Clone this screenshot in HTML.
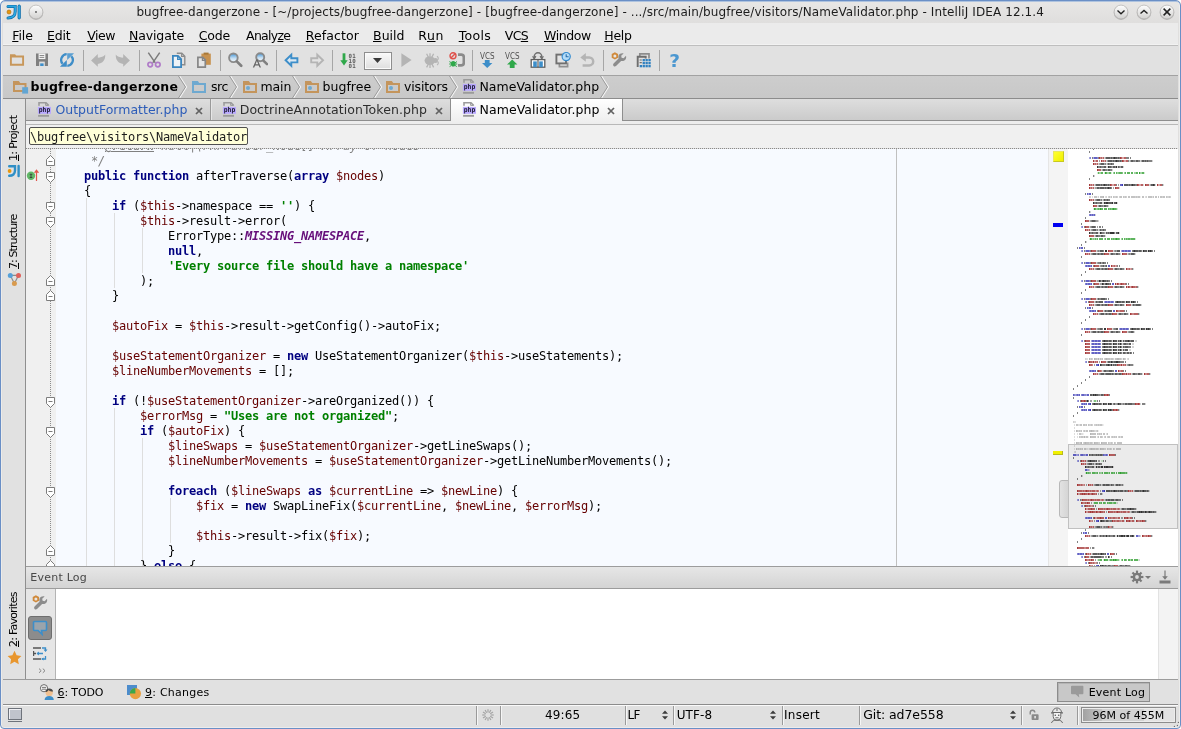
<!DOCTYPE html>
<html><head><meta charset="utf-8"><title>bugfree-dangerzone - IntelliJ IDEA 12.1.4</title>
<style>

html,body{margin:0;padding:0;}
body{width:1181px;height:729px;overflow:hidden;background:#fff;font-family:"DejaVu Sans","Liberation Sans",sans-serif;font-size:12.5px;color:#000;}
#win{position:absolute;left:0;top:0;width:1181px;height:729px;overflow:hidden;background:#e0dfde;border-radius:5px 5px 4px 4px;will-change:transform;}
.abs{position:absolute;}
.t{white-space:pre;}
.t u{text-decoration:underline;text-underline-offset:0.5px;text-decoration-thickness:1px;}
.vt{transform-origin:0 0;transform:rotate(-90deg);}
#frame{position:absolute;left:0;top:0;width:1179px;height:727px;border:1px solid #6a8fc6;border-radius:5px 5px 4px 4px;box-shadow:inset 0 1px 0 rgba(120,158,210,.55),inset 0 0 0 1px rgba(255,255,255,.4);z-index:50;pointer-events:none;}
#crumb{position:absolute;left:29px;top:127px;height:16px;width:217px;border:1px solid #4f4f4f;border-radius:2px;background:#ffffd8;font-family:"DejaVu Sans Mono","Liberation Mono",monospace;font-size:12px;line-height:18px;letter-spacing:-0.2247px;white-space:pre;padding-left:0;color:#1c1c1c;}
#editor{position:absolute;left:26px;top:149px;width:1152px;height:417px;overflow:hidden;background:#f7faff;}
#gutter{position:absolute;left:0;top:0;width:30px;height:417px;background:#f0f0f0;}
#code{position:absolute;left:30px;top:-10px;font-family:"DejaVu Sans Mono","Liberation Mono",monospace;font-size:12px;line-height:15px;letter-spacing:-0.2247px;white-space:pre;color:#000;}
.ln{height:15px;}
.k{color:#000080;font-weight:bold;}
.v{color:#660000;}
.s{color:#008000;font-weight:bold;}
.c{color:#660e7a;font-weight:bold;font-style:italic;}
.cm{color:#808080;font-style:italic;}
.tg{font-weight:bold;text-decoration:underline;}
.ig{position:absolute;width:1px;background:#dedede;}

</style></head>
<body>
<div id="win">
<div class="abs" style="left:0px;top:0px;width:1181px;height:23px;background:linear-gradient(#e8e7e6,#dfdedd)"></div>
<span class="abs t" style="left:136.40px;top:5px;font:12px 'DejaVu Sans',Liberation Sans,sans-serif;line-height:15px;letter-spacing:0.100px;color:#1c1c1c;">bugfree-dangerzone - [~/projects/bugfree-dangerzone] - [bugfree-dangerzone] - .../src/main/bugfree/visitors/NameValidator.php - IntelliJ IDEA 12.1.4</span>
<svg class="abs" style="left:6px;top:4px" width="16" height="16" viewBox="0 0 16 16" ><path d="M2.000 2.400H9.200V7.600C9.200 11.600 6.600 14 2 14" fill="none" stroke="#0e6aa8" stroke-width="3" stroke-linecap="round"/><path d="M2.000 2.400H9.200V7.600C9.200 11.600 6.600 14 2 14" fill="none" stroke="#2aa7e0" stroke-width="1.700" stroke-linecap="round"/><path d="M13.200 2.200V13.800" stroke="#0e6aa8" stroke-width="3.200" stroke-linecap="round"/><path d="M13.200 2.200V13.800" stroke="#2aa7e0" stroke-width="1.800" stroke-linecap="round"/><circle cx="3.000" cy="8" r="2" fill="#e8960c" stroke="#a8680a" stroke-width=".6"/></svg>
<svg class="abs" style="left:27px;top:2.5px" width="18" height="18" viewBox="0 0 18 18" ><defs><linearGradient id="wg0" x1="0" y1="0" x2="0" y2="1"><stop offset="0" stop-color="#fefefe"/><stop offset="1" stop-color="#d2d1d0"/></linearGradient></defs><circle cx="9" cy="9.700" r="7.200" fill="#8f8e8d" opacity=".5"/><circle cx="9" cy="9" r="6.900" fill="url(#wg0)" stroke="#b0afae" stroke-width=".7"/><circle cx="9" cy="9" r="0.900" fill="#555"/></svg>
<svg class="abs" style="left:1111.6px;top:2.5px" width="18" height="18" viewBox="0 0 18 18" ><defs><linearGradient id="wg1" x1="0" y1="0" x2="0" y2="1"><stop offset="0" stop-color="#fefefe"/><stop offset="1" stop-color="#d2d1d0"/></linearGradient></defs><circle cx="9" cy="9.700" r="7.200" fill="#8f8e8d" opacity=".5"/><circle cx="9" cy="9" r="6.900" fill="url(#wg1)" stroke="#b0afae" stroke-width=".7"/><path d="M5.500 7.600L9 10.700 12.500 7.600" fill="none" stroke="#222" stroke-width="1.400"/></svg>
<svg class="abs" style="left:1134.5px;top:2.5px" width="18" height="18" viewBox="0 0 18 18" ><defs><linearGradient id="wg2" x1="0" y1="0" x2="0" y2="1"><stop offset="0" stop-color="#fefefe"/><stop offset="1" stop-color="#d2d1d0"/></linearGradient></defs><circle cx="9" cy="9.700" r="7.200" fill="#8f8e8d" opacity=".5"/><circle cx="9" cy="9" r="6.900" fill="url(#wg2)" stroke="#b0afae" stroke-width=".7"/><path d="M5.500 10.500L9 7.400 12.500 10.500" fill="none" stroke="#222" stroke-width="1.400"/></svg>
<svg class="abs" style="left:1157.5px;top:2.5px" width="18" height="18" viewBox="0 0 18 18" ><defs><linearGradient id="wg3" x1="0" y1="0" x2="0" y2="1"><stop offset="0" stop-color="#fefefe"/><stop offset="1" stop-color="#d2d1d0"/></linearGradient></defs><circle cx="9" cy="9.700" r="7.200" fill="#8f8e8d" opacity=".5"/><circle cx="9" cy="9" r="6.900" fill="url(#wg3)" stroke="#b0afae" stroke-width=".7"/><path d="M5.600 5.600l6.800 6.800M12.400 5.600l-6.800 6.800" fill="none" stroke="#222" stroke-width="1.500"/></svg>
<div class="abs" style="left:3px;top:23px;width:1175px;height:21px;background:#ebebeb"></div>
<div class="abs" style="left:3px;top:44px;width:1175px;height:1px;background:#f2f2f2"></div>
<div class="abs" style="left:3px;top:45px;width:1175px;height:1px;background:#bebebe"></div>
<span class="abs t" style="left:12.20px;top:28px;font:12.5px 'DejaVu Sans',Liberation Sans,sans-serif;line-height:15px;letter-spacing:-0.075px;color:#000;"><u>F</u>ile</span>
<span class="abs t" style="left:47.00px;top:28px;font:12.5px 'DejaVu Sans',Liberation Sans,sans-serif;line-height:15px;letter-spacing:-0.168px;color:#000;"><u>E</u>dit</span>
<span class="abs t" style="left:87.30px;top:28px;font:12.5px 'DejaVu Sans',Liberation Sans,sans-serif;line-height:15px;letter-spacing:-0.480px;color:#000;"><u>V</u>iew</span>
<span class="abs t" style="left:129.10px;top:28px;font:12.5px 'DejaVu Sans',Liberation Sans,sans-serif;line-height:15px;letter-spacing:-0.154px;color:#000;"><u>N</u>avigate</span>
<span class="abs t" style="left:198.80px;top:28px;font:12.5px 'DejaVu Sans',Liberation Sans,sans-serif;line-height:15px;letter-spacing:-0.203px;color:#000;"><u>C</u>ode</span>
<span class="abs t" style="left:246.10px;top:28px;font:12.5px 'DejaVu Sans',Liberation Sans,sans-serif;line-height:15px;letter-spacing:-0.727px;color:#000;">Analy<u>z</u>e</span>
<span class="abs t" style="left:305.80px;top:28px;font:12.5px 'DejaVu Sans',Liberation Sans,sans-serif;line-height:15px;letter-spacing:0.101px;color:#000;"><u>R</u>efactor</span>
<span class="abs t" style="left:373.00px;top:28px;font:12.5px 'DejaVu Sans',Liberation Sans,sans-serif;line-height:15px;letter-spacing:0.039px;color:#000;"><u>B</u>uild</span>
<span class="abs t" style="left:418.30px;top:28px;font:12.5px 'DejaVu Sans',Liberation Sans,sans-serif;line-height:15px;letter-spacing:0.577px;color:#000;">R<u>u</u>n</span>
<span class="abs t" style="left:458.70px;top:28px;font:12.5px 'DejaVu Sans',Liberation Sans,sans-serif;line-height:15px;letter-spacing:0.305px;color:#000;"><u>T</u>ools</span>
<span class="abs t" style="left:504.80px;top:28px;font:12.5px 'DejaVu Sans',Liberation Sans,sans-serif;line-height:15px;letter-spacing:-0.640px;color:#000;">VC<u>S</u></span>
<span class="abs t" style="left:544.00px;top:28px;font:12.5px 'DejaVu Sans',Liberation Sans,sans-serif;line-height:15px;letter-spacing:-0.392px;color:#000;"><u>W</u>indow</span>
<span class="abs t" style="left:604.30px;top:28px;font:12.5px 'DejaVu Sans',Liberation Sans,sans-serif;line-height:15px;letter-spacing:-0.288px;color:#000;"><u>H</u>elp</span>
<div class="abs" style="left:3px;top:46px;width:1175px;height:29px;background:#e1e1e1"></div>
<div class="abs" style="left:3px;top:75px;width:1175px;height:1px;background:#a2a2a2"></div>
<svg class="abs" style="left:9px;top:52px" width="16" height="16" viewBox="0 0 16 16" ><path d="M1.900 4.500h12.200v8.300h-12.200z" fill="none" stroke="#c8975a" stroke-width="1.900"/><path d="M1 2.200h5.200l1.300 2.200H1z" fill="#c8975a"/></svg>
<svg class="abs" style="left:34px;top:52px" width="16" height="16" viewBox="0 0 16 16" ><path d="M2 1.5h12v12.5h-12z" fill="#7f7f7f"/><rect x="4.6" y="1.5" width="6.8" height="5.6" fill="#f4f4f4"/><rect x="5.6" y="3" width="4.6" height="0.9" fill="#7f7f7f"/><rect x="5.6" y="4.9" width="4.6" height="0.9" fill="#7f7f7f"/><rect x="5.2" y="9.6" width="5.6" height="4.4" fill="#e0e0e0"/><rect x="6.2" y="11.4" width="3.4" height="2.6" fill="#3d8ec9"/></svg>
<svg class="abs" style="left:59px;top:52px" width="16" height="16" viewBox="0 0 16 16" ><path d="M7.700 2.200A5.800 5.800 0 0 0 3.600 11.800" fill="none" stroke="#3f8ec8" stroke-width="2.300"/><path d="M0.900 14.800H7.800V7.900z" fill="#3f8ec8"/><path d="M8.300 13.800A5.800 5.800 0 0 0 12.400 4.200" fill="none" stroke="#3f8ec8" stroke-width="2.300"/><path d="M15.100 1.200H8.200V8.100z" fill="#5a9fd2"/></svg>
<div class="abs" style="left:83px;top:50px;width:1px;height:21px;background:#a6a6a6"></div>
<svg class="abs" style="left:90px;top:52px" width="16" height="16" viewBox="0 0 16 16" ><path d="M1.100 8.600L7.800 2V5.600C10.500 5.800 13.500 5 15.200 2.600C15.600 8 12.600 11.600 7.800 12V14.800z" fill="#b4b4b4"/></svg>
<svg class="abs" style="left:115px;top:52px" width="16" height="16" viewBox="0 0 16 16" ><g transform="translate(16,0) scale(-1,1)"><path d="M1.100 8.600L7.800 2V5.600C10.500 5.800 13.500 5 15.200 2.600C15.600 8 12.600 11.600 7.800 12V14.800z" fill="#b4b4b4"/></g></svg>
<div class="abs" style="left:139px;top:50px;width:1px;height:21px;background:#a6a6a6"></div>
<svg class="abs" style="left:146px;top:52px" width="16" height="16" viewBox="0 0 16 16" ><path d="M2.300 0.600L9.300 10.800M13.700 0.600L6.700 10.800" stroke="#7c7c7c" stroke-width="1.500" fill="none"/><circle cx="4.200" cy="12.600" r="2.300" fill="none" stroke="#b07cc8" stroke-width="1.700"/><circle cx="11.800" cy="12.600" r="2.300" fill="none" stroke="#b07cc8" stroke-width="1.700"/></svg>
<svg class="abs" style="left:171px;top:52px" width="16" height="16" viewBox="0 0 16 16" ><path d="M5.800 1.200h5l3 3v8.600h-4" fill="none" stroke="#8c8c8c" stroke-width="1.400"/><path d="M10.600 1.200v3.200h3.200" fill="none" stroke="#8c8c8c" stroke-width="1.100"/><path d="M1.900 3.900h5l3.200 3.200v8h-8.200z" fill="#eef3f7" stroke="#3a86bf" stroke-width="1.800"/><path d="M6.700 3.900v3.400h3.400" fill="none" stroke="#3a86bf" stroke-width="1.300"/></svg>
<svg class="abs" style="left:196px;top:52px" width="16" height="16" viewBox="0 0 16 16" ><rect x="5.400" y="1.600" width="9.400" height="11.200" fill="#c8924f"/><rect x="7.600" y="0.600" width="5" height="2" fill="#a87838"/><path d="M1.900 5.300h4.800l2.600 2.600v7.200h-7.400z" fill="#e6e6e6" stroke="#868686" stroke-width="1.700"/><path d="M6.400 5.300v3h3" fill="none" stroke="#868686" stroke-width="1.200"/></svg>
<div class="abs" style="left:220px;top:50px;width:1px;height:21px;background:#a6a6a6"></div>
<svg class="abs" style="left:227px;top:52px" width="16" height="16" viewBox="0 0 16 16" ><defs><linearGradient id="lens" x1="0" y1="0" x2="0" y2="1"><stop offset="0" stop-color="#3f96dc"/><stop offset=".55" stop-color="#c4def2"/><stop offset="1" stop-color="#f4f8fb"/></linearGradient></defs><circle cx="6.400" cy="5.800" r="4.300" fill="url(#lens)" stroke="#8a8a8a" stroke-width="1.900"/><path d="M9.800 9.400L14.200 13.800" stroke="#808080" stroke-width="2.700" stroke-linecap="round"/></svg>
<svg class="abs" style="left:252px;top:52px" width="16" height="16" viewBox="0 0 16 16" ><circle cx="8.200" cy="5.200" r="4" fill="url(#lens)" stroke="#8a8a8a" stroke-width="1.900"/><path d="M11.400 8.600L15 12.200" stroke="#808080" stroke-width="2.600" stroke-linecap="round"/><path d="M0.800 15.600L4.200 7.400h1.400l3.400 8.200H7.600l-.9-2.200H3.100l-.9 2.200zM3.600 12.200h2.600L4.900 8.900z" fill="#666"/></svg>
<div class="abs" style="left:276px;top:50px;width:1px;height:21px;background:#a6a6a6"></div>
<svg class="abs" style="left:284px;top:52px" width="16" height="16" viewBox="0 0 16 16" ><path d="M1.600 8.300L7.300 2.800v3.400h6.100v4.200H7.300v3.400z" fill="#dbe8f2" stroke="#3d8ec9" stroke-width="1.900" stroke-linejoin="miter"/></svg>
<svg class="abs" style="left:309px;top:52px" width="16" height="16" viewBox="0 0 16 16" ><g transform="translate(15.600,0) scale(-1,1)"><path d="M1.600 8.300L7.300 2.800v3.400h6.100v4.200H7.300v3.400z" fill="#e4e4e4" stroke="#b4b4b4" stroke-width="1.900"/></g></svg>
<div class="abs" style="left:332px;top:50px;width:1px;height:21px;background:#a6a6a6"></div>
<svg class="abs" style="left:340px;top:52px" width="16" height="16" viewBox="0 0 16 16" ><path d="M4 1.300v8.500" stroke="#2fa84a" stroke-width="2.800"/><path d="M0.300 8.200h7.400L4 13.600z" fill="#2fa84a"/><text x="8.600" y="5.600" font-family="DejaVu Sans Mono, Liberation Mono, monospace" font-weight="bold" font-size="5.800" fill="#5c5c5c" letter-spacing="0.200">01</text><text x="8.600" y="10.600" font-family="DejaVu Sans Mono, Liberation Mono, monospace" font-weight="bold" font-size="5.800" fill="#5c5c5c" letter-spacing="0.200">10</text><text x="8.600" y="15.600" font-family="DejaVu Sans Mono, Liberation Mono, monospace" font-weight="bold" font-size="5.800" fill="#5c5c5c" letter-spacing="0.200">01</text></svg>
<div class="abs" style="left:364px;top:52px;width:28px;height:18px;border:1px solid #8e8e8e;background:linear-gradient(#fafafa,#dedede);box-sizing:border-box;box-shadow:inset 0 0 0 1px #fbfbfb"></div>
<svg class="abs" style="left:373px;top:58px" width="9" height="5" viewBox="0 0 9 5" ><path d="M0 0h9L4.500 5z" fill="#3a3a3a"/></svg>
<svg class="abs" style="left:399px;top:52px" width="16" height="16" viewBox="0 0 16 16" ><path d="M2.400 1.200L12.600 8.100 2.400 15z" fill="#b4b4b4"/></svg>
<svg class="abs" style="left:424px;top:52px" width="16" height="16" viewBox="0 0 16 16" ><ellipse cx="5.800" cy="8.600" rx="5.200" ry="4.400" fill="#b4b4b4"/><circle cx="11.400" cy="8.600" r="2.500" fill="#b4b4b4"/><path d="M2.600 1.800l1.800 3.400M6 1.200v3.400M9.600 1.800L8 5M2.600 15.400l1.800-3.400M6 16v-3.400M9.600 15.400L8 12" stroke="#b4b4b4" stroke-width="1.300"/><path d="M13 4.200c1.600 1 1.600 2.600.6 3.600M13 13c1.600-1 1.600-2.600.6-3.600" stroke="#b4b4b4" stroke-width="1.100" fill="none"/></svg>
<svg class="abs" style="left:449px;top:52px" width="16" height="16" viewBox="0 0 16 16" ><circle cx="4" cy="3.800" r="3" fill="none" stroke="#e0524c" stroke-width="1.400"/><path d="M1.900 5.900L6.100 1.700" stroke="#e0524c" stroke-width="1.400"/><ellipse cx="4.200" cy="11.800" rx="2.300" ry="2.800" fill="#2fa84a"/><path d="M0.400 9.600l2 1.200M0.200 12h2M0.600 14.600l1.800-1.200M8 9.600l-2 1.200M8.200 12h-2M7.800 14.600l-1.800-1.200" stroke="#2fa84a" stroke-width="1"/><path d="M9 2.600h3.200a2.600 2.600 0 0 1 2.600 2.600v5.600a2.600 2.600 0 0 1-2.600 2.600H9" fill="none" stroke="#8a8a8a" stroke-width="2.600"/></svg>
<div class="abs" style="left:472px;top:50px;width:1px;height:21px;background:#a6a6a6"></div>
<svg class="abs" style="left:480px;top:52px" width="16" height="16" viewBox="0 0 16 16" ><text x="0" y="6.800" font-family="DejaVu Sans, Liberation Sans, sans-serif" font-size="8" fill="#505050" textLength="14.600" lengthAdjust="spacingAndGlyphs">VCS</text><path d="M4.800 8h4.800v3h2.800L7.200 16 2 11h2.800z" fill="#3d8ec9"/></svg>
<svg class="abs" style="left:505px;top:52px" width="16" height="16" viewBox="0 0 16 16" ><text x="0" y="6.800" font-family="DejaVu Sans, Liberation Sans, sans-serif" font-size="8" fill="#505050" textLength="14.600" lengthAdjust="spacingAndGlyphs">VCS</text><path d="M4.800 16h4.800v-3.400h2.800L7.200 7.600 2 12.600h2.800z" fill="#2fa84a"/></svg>
<svg class="abs" style="left:530px;top:52px" width="16" height="16" viewBox="0 0 16 16" ><path d="M4.200 6.400V4.600a3.800 3.800 0 0 1 7.600 0v1.800" fill="none" stroke="#6e6e6e" stroke-width="1.500"/><path d="M2.600 4.200l1.600 2.600 1.700-2.600M10.100 4.200l1.700 2.600 1.600-2.600" fill="none" stroke="#6e6e6e" stroke-width="1.200"/><rect x="1.200" y="7.600" width="13.600" height="7.600" fill="#fff" stroke="#5f5f5f" stroke-width="1.300"/><rect x="3.200" y="9.400" width="3.600" height="5.800" fill="#3d8ec9"/><rect x="9.200" y="9.400" width="3.600" height="5.800" fill="#3d8ec9"/><path d="M8 7.600v7.600" stroke="#5f5f5f" stroke-width="1.200"/></svg>
<svg class="abs" style="left:555px;top:52px" width="16" height="16" viewBox="0 0 16 16" ><path d="M4.400 11.600v3h8.200v-4" fill="none" stroke="#909090" stroke-width="1.700"/><rect x="1.400" y="2.600" width="9.600" height="8.800" fill="#e4e4e4" stroke="#707070" stroke-width="1.900"/><circle cx="11.200" cy="4.600" r="4.100" fill="#b4dcf8" stroke="#3a8ed0" stroke-width="1.200"/><path d="M11.200 2.200v2.600h2.400" fill="none" stroke="#2a6eaa" stroke-width="1.100"/></svg>
<svg class="abs" style="left:580px;top:52px" width="16" height="16" viewBox="0 0 16 16" ><path d="M3.400 5.400h5.800a3.800 3.800 0 0 1 0 8H2.600" fill="none" stroke="#b4b4b4" stroke-width="2.500"/><path d="M0.300 5.400L5.800 1v8.800z" fill="#b4b4b4"/></svg>
<div class="abs" style="left:603px;top:50px;width:1px;height:21px;background:#a6a6a6"></div>
<svg class="abs" style="left:611px;top:52px" width="16" height="16" viewBox="0 0 16 16" ><path d="M15 3.800l-2.400 2.400-2-.4-.4-2 2.400-2.400c-2-.6-4.200.2-5 2.200-.4 1-.3 2 0 2.800L2.800 11.200c-.9.900-.9 2-.2 2.700.7.700 1.800.7 2.700-.2l4.800-4.800c.9.300 1.900.3 2.800-.1 1.900-.8 2.700-2.900 2.100-5z" fill="#8c8c8c"/><path d="M3.900 0.300l3.200 1.800v3.700L3.900 7.600 0.700 5.800V2.100z" fill="#d08a3c"/><circle cx="3.900" cy="3.950" r="1.500" fill="#e6e6e6"/></svg>
<svg class="abs" style="left:636px;top:52px" width="16" height="16" viewBox="0 0 16 16" ><path d="M3.800 4.400V1.800h9.200v4.600" fill="none" stroke="#8c8c8c" stroke-width="1.700"/><path d="M1.700 15V4.800h8v1.800" fill="none" stroke="#6e6e6e" stroke-width="1.900"/><path d="M3.600 8h2.200M3.600 10.600h2.200" stroke="#6e6e6e" stroke-width="1.200"/><g fill="#2f80c0"><rect x="6.600" y="7" width="2.300" height="2.300"/><rect x="9.500" y="7" width="2.300" height="2.300"/><rect x="12.400" y="7" width="2.300" height="2.300"/><rect x="6.600" y="10" width="2.300" height="2.300"/><rect x="9.500" y="10" width="2.300" height="2.300"/><rect x="12.400" y="10" width="2.300" height="2.300"/><rect x="3.700" y="13" width="2.300" height="2.300"/><rect x="6.600" y="13" width="2.300" height="2.300"/><rect x="9.500" y="13" width="2.300" height="2.300"/><rect x="12.400" y="13" width="2.300" height="2.300"/></g></svg>
<div class="abs" style="left:659px;top:50px;width:1px;height:21px;background:#a6a6a6"></div>
<svg class="abs" style="left:667px;top:52px" width="16" height="16" viewBox="0 0 16 16" ><text x="7.500" y="15" text-anchor="middle" font-family="DejaVu Sans, Liberation Sans, sans-serif" font-weight="bold" font-size="18.500" fill="#4b97d0">?</text></svg>
<div class="abs" style="left:3px;top:76px;width:1175px;height:22px;background:linear-gradient(#cdcdcd,#c8c8c8)"></div>
<div class="abs" style="left:3px;top:98px;width:1175px;height:1px;background:#8c8c8c"></div>
<svg class="abs" style="left:13px;top:79px" width="16" height="16" viewBox="0 0 16 16" ><path d="M1 5h11.500v7h-11.500z" fill="none" stroke="#c4955c" stroke-width="2"/><path d="M0 2h5.800l1.700 2.200H0z" fill="#c4955c"/><rect x="9.200" y="8.200" width="5.900" height="6.400" fill="#62a5d2"/></svg>
<span class="abs t" style="left:30.60px;top:79px;font:bold 12.5px 'DejaVu Sans',Liberation Sans,sans-serif;line-height:15px;letter-spacing:0.219px;color:#000;">bugfree-dangerzone</span>
<svg class="abs" style="left:178px;top:76px" width="10" height="22" viewBox="0 0 10 22" ><path d="M1.500 0L8.500 11 1.500 22" fill="none" stroke="#f4f4f4" stroke-width="1.300"/><path d="M0.500 0L7.500 11 0.500 22" fill="none" stroke="#9a9a9a" stroke-width="1"/></svg>
<svg class="abs" style="left:192px;top:79px" width="16" height="16" viewBox="0 0 16 16" ><path d="M1 5h12v8h-12z" fill="none" stroke="#6ea9d0" stroke-width="2"/><path d="M0 2h5.800l1.700 2.200H0z" fill="#6ea9d0"/></svg>
<span class="abs t" style="left:211.00px;top:79px;font:12.5px 'DejaVu Sans',Liberation Sans,sans-serif;line-height:15px;letter-spacing:-0.488px;color:#000;">src</span>
<svg class="abs" style="left:229px;top:76px" width="10" height="22" viewBox="0 0 10 22" ><path d="M1.500 0L8.500 11 1.500 22" fill="none" stroke="#f4f4f4" stroke-width="1.300"/><path d="M0.500 0L7.500 11 0.500 22" fill="none" stroke="#9a9a9a" stroke-width="1"/></svg>
<svg class="abs" style="left:243px;top:79px" width="16" height="16" viewBox="0 0 16 16" ><path d="M1 5h12v8h-12z" fill="none" stroke="#c4955c" stroke-width="2"/><path d="M0 2h5.800l1.700 2.200H0z" fill="#c4955c"/><circle cx="5" cy="8.900" r="2" fill="#6ea9d0"/></svg>
<span class="abs t" style="left:260.60px;top:79px;font:12.5px 'DejaVu Sans',Liberation Sans,sans-serif;line-height:15px;letter-spacing:-0.170px;color:#000;">main</span>
<svg class="abs" style="left:292px;top:76px" width="10" height="22" viewBox="0 0 10 22" ><path d="M1.500 0L8.500 11 1.500 22" fill="none" stroke="#f4f4f4" stroke-width="1.300"/><path d="M0.500 0L7.500 11 0.500 22" fill="none" stroke="#9a9a9a" stroke-width="1"/></svg>
<svg class="abs" style="left:305px;top:79px" width="16" height="16" viewBox="0 0 16 16" ><path d="M1 5h12v8h-12z" fill="none" stroke="#c4955c" stroke-width="2"/><path d="M0 2h5.800l1.700 2.200H0z" fill="#c4955c"/><circle cx="5" cy="8.900" r="2" fill="#6ea9d0"/></svg>
<span class="abs t" style="left:322.60px;top:79px;font:12.5px 'DejaVu Sans',Liberation Sans,sans-serif;line-height:15px;letter-spacing:0.009px;color:#000;">bugfree</span>
<svg class="abs" style="left:373px;top:76px" width="10" height="22" viewBox="0 0 10 22" ><path d="M1.500 0L8.500 11 1.500 22" fill="none" stroke="#f4f4f4" stroke-width="1.300"/><path d="M0.500 0L7.500 11 0.500 22" fill="none" stroke="#9a9a9a" stroke-width="1"/></svg>
<svg class="abs" style="left:386px;top:79px" width="16" height="16" viewBox="0 0 16 16" ><path d="M1 5h12v8h-12z" fill="none" stroke="#c4955c" stroke-width="2"/><path d="M0 2h5.800l1.700 2.200H0z" fill="#c4955c"/><circle cx="5" cy="8.900" r="2" fill="#6ea9d0"/></svg>
<span class="abs t" style="left:404.00px;top:79px;font:12.5px 'DejaVu Sans',Liberation Sans,sans-serif;line-height:15px;letter-spacing:-0.135px;color:#000;">visitors</span>
<svg class="abs" style="left:449px;top:76px" width="10" height="22" viewBox="0 0 10 22" ><path d="M1.500 0L8.500 11 1.500 22" fill="none" stroke="#f4f4f4" stroke-width="1.300"/><path d="M0.500 0L7.500 11 0.500 22" fill="none" stroke="#9a9a9a" stroke-width="1"/></svg>
<svg class="abs" style="left:462px;top:79px" width="16" height="16" viewBox="0 0 16 16" ><path d="M2 3.700V0.800h7l2.300 2.200v0.800" fill="none" stroke="#9b9b9b" stroke-width="1.600"/><path d="M8.600 0.800v2.600h2.600" fill="none" stroke="#9b9b9b" stroke-width="1"/><rect x="1.100" y="12.900" width="10.900" height="1.850" fill="#9b9b9b"/><rect x="0.900" y="4.900" width="13.100" height="6.900" fill="#b9a9ff"/><text x="7.500" y="9.700" text-anchor="middle" font-family="DejaVu Sans, Liberation Sans, sans-serif" font-weight="bold" font-size="7" fill="#1e1c34" textLength="11.400" lengthAdjust="spacingAndGlyphs">php</text></svg>
<span class="abs t" style="left:479.40px;top:79px;font:12.5px 'DejaVu Sans',Liberation Sans,sans-serif;line-height:15px;letter-spacing:0.054px;color:#000;">NameValidator.php</span>
<svg class="abs" style="left:600px;top:76px" width="10" height="22" viewBox="0 0 10 22" ><path d="M1.500 0L8.500 11 1.500 22" fill="none" stroke="#f4f4f4" stroke-width="1.300"/><path d="M0.500 0L7.500 11 0.500 22" fill="none" stroke="#9a9a9a" stroke-width="1"/></svg>
<div class="abs" style="left:26px;top:99px;width:1152px;height:21px;background:linear-gradient(#dedede,#cbcbcb)"></div>
<div class="abs" style="left:26px;top:120px;width:1152px;height:1px;background:#8e8e8e"></div>
<div class="abs" style="left:26px;top:121px;width:1152px;height:3px;background:#ededed"></div>
<div class="abs" style="left:26px;top:124px;width:1152px;height:1px;background:#b8b8b8"></div>
<div class="abs" style="left:26px;top:125px;width:1152px;height:23px;background:#f0f0f0"></div>
<div class="abs" style="left:210px;top:99px;width:1px;height:21px;background:#9a9a9a"></div>
<div class="abs" style="left:211px;top:99px;width:1px;height:21px;background:#e6e6e6"></div>
<div class="abs" style="left:450px;top:99px;width:1px;height:22px;background:#8e8e8e"></div>
<div class="abs" style="left:451px;top:99px;width:171px;height:25px;background:linear-gradient(#ffffff,#f4f4f4 60%,#ededed)"></div>
<div class="abs" style="left:622px;top:99px;width:1px;height:22px;background:#8e8e8e"></div>
<svg class="abs" style="left:37px;top:102px" width="16" height="16" viewBox="0 0 16 16" ><path d="M2 3.700V0.800h7l2.300 2.200v0.800" fill="none" stroke="#9b9b9b" stroke-width="1.600"/><path d="M8.600 0.800v2.600h2.600" fill="none" stroke="#9b9b9b" stroke-width="1"/><rect x="1.100" y="12.900" width="10.900" height="1.850" fill="#9b9b9b"/><rect x="0.900" y="4.900" width="13.100" height="6.900" fill="#b9a9ff"/><text x="7.500" y="9.700" text-anchor="middle" font-family="DejaVu Sans, Liberation Sans, sans-serif" font-weight="bold" font-size="7" fill="#1e1c34" textLength="11.400" lengthAdjust="spacingAndGlyphs">php</text></svg>
<span class="abs t" style="left:55.40px;top:102px;font:12.5px 'DejaVu Sans',Liberation Sans,sans-serif;line-height:15px;letter-spacing:0.012px;color:#2c5cb8;">OutputFormatter.php</span>
<svg class="abs" style="left:194.5px;top:107px" width="8" height="8" viewBox="0 0 8 8" ><path d="M1 1l6 6M7 1l-6 6" stroke="#626262" stroke-width="1.750"/></svg>
<svg class="abs" style="left:222px;top:102px" width="16" height="16" viewBox="0 0 16 16" ><path d="M2 3.700V0.800h7l2.300 2.200v0.800" fill="none" stroke="#9b9b9b" stroke-width="1.600"/><path d="M8.600 0.800v2.600h2.600" fill="none" stroke="#9b9b9b" stroke-width="1"/><rect x="1.100" y="12.900" width="10.900" height="1.850" fill="#9b9b9b"/><rect x="0.900" y="4.900" width="13.100" height="6.900" fill="#b9a9ff"/><text x="7.500" y="9.700" text-anchor="middle" font-family="DejaVu Sans, Liberation Sans, sans-serif" font-weight="bold" font-size="7" fill="#1e1c34" textLength="11.400" lengthAdjust="spacingAndGlyphs">php</text></svg>
<span class="abs t" style="left:239.70px;top:102px;font:12.5px 'DejaVu Sans',Liberation Sans,sans-serif;line-height:15px;letter-spacing:0.080px;color:#2e2e2e;">DoctrineAnnotationToken.php</span>
<svg class="abs" style="left:434.5px;top:107px" width="8" height="8" viewBox="0 0 8 8" ><path d="M1 1l6 6M7 1l-6 6" stroke="#626262" stroke-width="1.750"/></svg>
<svg class="abs" style="left:462px;top:102px" width="16" height="16" viewBox="0 0 16 16" ><path d="M2 3.700V0.800h7l2.300 2.200v0.800" fill="none" stroke="#9b9b9b" stroke-width="1.600"/><path d="M8.600 0.800v2.600h2.600" fill="none" stroke="#9b9b9b" stroke-width="1"/><rect x="1.100" y="12.900" width="10.900" height="1.850" fill="#9b9b9b"/><rect x="0.900" y="4.900" width="13.100" height="6.900" fill="#b9a9ff"/><text x="7.500" y="9.700" text-anchor="middle" font-family="DejaVu Sans, Liberation Sans, sans-serif" font-weight="bold" font-size="7" fill="#1e1c34" textLength="11.400" lengthAdjust="spacingAndGlyphs">php</text></svg>
<span class="abs t" style="left:479.60px;top:102px;font:12.5px 'DejaVu Sans',Liberation Sans,sans-serif;line-height:15px;letter-spacing:0.061px;color:#000;">NameValidator.php</span>
<svg class="abs" style="left:606.5px;top:107px" width="8" height="8" viewBox="0 0 8 8" ><path d="M1 1l6 6M7 1l-6 6" stroke="#626262" stroke-width="1.750"/></svg>
<div class="abs" style="left:3px;top:99px;width:22px;height:605px;background:#e1e1e1"></div>
<div class="abs" style="left:25px;top:99px;width:1px;height:605px;background:#8f8f8f"></div>
<span class="abs t vt" style="left:6px;top:160.80px;font:11px 'DejaVu Sans',Liberation Sans,sans-serif;line-height:15px;letter-spacing:-0.636px;"><u>1</u>: Project</span>
<span class="abs t vt" style="left:6px;top:268.60px;font:11px 'DejaVu Sans',Liberation Sans,sans-serif;line-height:15px;letter-spacing:-0.909px;"><u>7</u>: Structure</span>
<span class="abs t vt" style="left:6px;top:647.00px;font:11px 'DejaVu Sans',Liberation Sans,sans-serif;line-height:15px;letter-spacing:-0.769px;"><u>2</u>: Favorites</span>
<svg class="abs" style="left:7px;top:164px" width="14" height="14" viewBox="0 0 14 14" ><path d="M2.200 2.200H8V6.600C8 10 5.800 11.800 2.200 11.800" fill="none" stroke="#2f8fc6" stroke-width="2.400" stroke-linecap="round"/><path d="M11.600 2V12" stroke="#2f8fc6" stroke-width="2.400" stroke-linecap="round"/><circle cx="2.600" cy="7" r="1.900" fill="#e8960c"/></svg>
<svg class="abs" style="left:7px;top:271px" width="15" height="16" viewBox="0 0 15 16" ><path d="M3.300 4.400L11.500 4.400L7.400 12.400z" fill="none" stroke="#8a8a8a" stroke-width="1.200"/><circle cx="3.300" cy="4.400" r="2.500" fill="#56a0d8"/><circle cx="11.500" cy="4.400" r="2.500" fill="#e0605a"/><circle cx="7.400" cy="12.400" r="2.500" fill="#d89a4e"/></svg>
<svg class="abs" style="left:7px;top:650px" width="15" height="15" viewBox="0 0 15 15" ><path d="M7.500 0.800l2.100 4.500 4.800.600-3.500 3.400.9 4.900-4.300-2.400-4.300 2.400.9-4.900L.6 5.900l4.800-.6z" fill="#e8962e"/></svg>
<div id="crumb">\bugfree\visitors\NameValidator</div>
<div id="editor"><div id="gutter"></div><div class="ig" style="left:60px;top:49px;height:368px"></div><div class="ig" style="left:88px;top:64px;height:75px"></div><div class="ig" style="left:88px;top:259px;height:158px"></div><div class="ig" style="left:116px;top:79px;height:45px"></div><div class="ig" style="left:116px;top:289px;height:128px"></div><div class="ig" style="left:144px;top:349px;height:45px"></div><div class="abs" style="left:870px;top:0;width:1px;height:417px;background:#c0c0c0"></div>
<div id="code"><div class="ln">     <span class="cm">* <b class="tg">@return</b> null|\PHPParser_Node[] Array of nodes</span></div><div class="ln"><span class="cm">     */</span></div><div class="ln">    <span class="k">public</span> <span class="k">function</span> afterTraverse(<span class="k">array</span> <span class="v">$nodes</span>)</div><div class="ln">    {</div><div class="ln">        <span class="k">if</span> (<span class="v">$this</span>-&gt;namespace == <span class="s">''</span>) {</div><div class="ln">            <span class="v">$this</span>-&gt;result-&gt;error(</div><div class="ln">                ErrorType::<span class="c">MISSING_NAMESPACE</span>,</div><div class="ln">                <span class="k">null</span>,</div><div class="ln">                <span class="s">'Every source file should have a namespace'</span></div><div class="ln">            );</div><div class="ln">        }</div><div class="ln"></div><div class="ln">        <span class="v">$autoFix</span> = <span class="v">$this</span>-&gt;result-&gt;getConfig()-&gt;autoFix;</div><div class="ln"></div><div class="ln">        <span class="v">$useStatementOrganizer</span> = <span class="k">new</span> UseStatementOrganizer(<span class="v">$this</span>-&gt;useStatements);</div><div class="ln">        <span class="v">$lineNumberMovements</span> = [];</div><div class="ln"></div><div class="ln">        <span class="k">if</span> (!<span class="v">$useStatementOrganizer</span>-&gt;areOrganized()) {</div><div class="ln">            <span class="v">$errorMsg</span> = <span class="s">"Uses are not organized"</span>;</div><div class="ln">            <span class="k">if</span> (<span class="v">$autoFix</span>) {</div><div class="ln">                <span class="v">$lineSwaps</span> = <span class="v">$useStatementOrganizer</span>-&gt;getLineSwaps();</div><div class="ln">                <span class="v">$lineNumberMovements</span> = <span class="v">$useStatementOrganizer</span>-&gt;getLineNumberMovements();</div><div class="ln"></div><div class="ln">                <span class="k">foreach</span> (<span class="v">$lineSwaps</span> <span class="k">as</span> <span class="v">$currentLine</span> =&gt; <span class="v">$newLine</span>) {</div><div class="ln">                    <span class="v">$fix</span> = <span class="k">new</span> SwapLineFix(<span class="v">$currentLine</span>, <span class="v">$newLine</span>, <span class="v">$errorMsg</span>);</div><div class="ln"></div><div class="ln">                    <span class="v">$this</span>-&gt;result-&gt;fix(<span class="v">$fix</span>);</div><div class="ln">                }</div><div class="ln">            } <span class="k">else</span> {</div></div><svg class="abs" style="left:0;top:0" width="60" height="417" viewBox="26 149 60 417"><path d="M50.500 149V566" stroke="#8c8c8c" stroke-dasharray="1 1"/><path d="M46.500 172.5h8v6l-4 4-4-4z" fill="#fff" stroke="#7d7d7d"/><path d="M48.500 176.5h4" stroke="#7d7d7d"/><path d="M46.500 202.5h8v6l-4 4-4-4z" fill="#fff" stroke="#7d7d7d"/><path d="M48.500 206.5h4" stroke="#7d7d7d"/><path d="M46.500 217.5h8v6l-4 4-4-4z" fill="#fff" stroke="#7d7d7d"/><path d="M48.500 221.5h4" stroke="#7d7d7d"/><path d="M46.500 397.5h8v6l-4 4-4-4z" fill="#fff" stroke="#7d7d7d"/><path d="M48.500 401.5h4" stroke="#7d7d7d"/><path d="M46.500 427.5h8v6l-4 4-4-4z" fill="#fff" stroke="#7d7d7d"/><path d="M48.500 431.5h4" stroke="#7d7d7d"/><path d="M46.500 487.5h8v6l-4 4-4-4z" fill="#fff" stroke="#7d7d7d"/><path d="M48.500 491.5h4" stroke="#7d7d7d"/><path d="M50.500 155.5l4 4v6h-8v-6z" fill="#fff" stroke="#7d7d7d"/><path d="M48.500 161.5h4" stroke="#7d7d7d"/><path d="M50.500 275.5l4 4v6h-8v-6z" fill="#fff" stroke="#7d7d7d"/><path d="M48.500 281.5h4" stroke="#7d7d7d"/><path d="M50.500 290.5l4 4v6h-8v-6z" fill="#fff" stroke="#7d7d7d"/><path d="M48.500 296.5h4" stroke="#7d7d7d"/><path d="M50.500 545.5l4 4v6h-8v-6z" fill="#fff" stroke="#7d7d7d"/><path d="M48.500 551.5h4" stroke="#7d7d7d"/><path d="M50.500 560.5l4 4v6h-8v-6z" fill="#fff" stroke="#7d7d7d"/><path d="M48.500 566.5h4" stroke="#7d7d7d"/><circle cx="31" cy="175.800" r="4.200" fill="#62b868"/><path d="M29.700 174.300h2.600M29.700 177.500h2.600M31 174.300v3.200" stroke="#3c4a3c" stroke-width="1"/><path d="M36.500 181V171" stroke="#e0584e" stroke-width="1.200"/><path d="M33.800 172.800l2.700-3.600 2.700 3.600z" fill="#e0584e"/></svg>
<div class="abs" style="left:1022px;top:0;width:20px;height:417px;background:#f4f4f4;border-left:1px solid #e6e6e6;box-sizing:border-box"></div>
<div class="abs" style="left:1033px;top:331px;width:12px;height:38px;background:linear-gradient(90deg,#e2e2e2,#d2d2d2);border:1px solid #b8b8b8;border-radius:3px;box-sizing:border-box"></div>
<div class="abs" style="left:1027px;top:2px;width:11px;height:11px;background:linear-gradient(135deg,#ffff30,#f0f000);border:1px solid #c8c820;border-top-color:#e8e860;border-left-color:#e8e860;box-sizing:border-box"></div>
<div class="abs" style="left:1027px;top:74px;width:10px;height:4px;background:#0000f0"></div>
<div class="abs" style="left:1027px;top:302px;width:10px;height:4px;background:#f0f000;border-bottom:1px solid #b8b820;border-right:1px solid #b8b820;box-sizing:border-box"></div>
<div class="abs" style="left:1042px;top:0;width:110px;height:417px;background:#fff"></div><svg class="abs" style="left:1042px;top:0" width="110" height="417" viewBox="1068 149 110 417" shape-rendering="crispEdges"><rect x="1068" y="444" width="110" height="85" fill="#ebebeb" stroke="none"/><path d="M1068.500 528.500V444.500H1177.500V528.500z" fill="none" stroke="#c0c0c0"/><path d="M1104 158h1M1106 161h1M1129 161h1M1140 161h1M1152 161h1M1098 164h1M1106 164h1M1106 167h1M1107 167h1M1123 167h1M1101 170h1M1112 170h1M1094 176h1M1094 185h1M1143 185h1M1149 185h1M1155 185h1M1163 185h1M1094 188h1M1119 188h1M1094 200h1M1102 200h1M1102 203h1M1103 203h1M1117 203h1M1097 206h1M1108 206h1M1090 212h1M1095 215h1M1089 221h1M1098 221h1M1089 227h1M1090 230h1M1098 230h1M1098 233h1M1099 233h1M1119 233h1M1094 236h1M1105 236h1M1086 242h1M1096 251h1M1113 251h1M1142 251h1M1147 251h1M1090 254h1M1109 254h1M1120 254h1M1127 254h1M1135 254h1M1096 263h1M1099 266h1M1094 269h1M1113 269h1M1124 269h1M1133 269h1M1096 281h1M1099 284h1M1094 287h1M1113 287h1M1124 287h1M1138 287h1M1096 299h1M1094 302h1M1125 302h1M1130 302h1M1094 305h1M1113 305h1M1124 305h1M1131 305h1M1141 305h1M1103 311h1M1098 314h1M1117 314h1M1128 314h1M1139 314h1M1096 329h1M1112 329h1M1140 329h1M1145 329h1M1090 332h1M1109 332h1M1120 332h1M1127 332h1M1134 332h1M1112 341h1M1117 341h1M1122 341h1M1135 341h1M1136 341h1M1112 344h1M1117 344h1M1122 344h1M1132 344h1M1133 344h1M1112 347h1M1117 347h1M1122 347h1M1132 347h1M1133 347h1M1112 350h1M1117 350h1M1122 350h1M1129 350h1M1130 350h1M1112 353h1M1117 353h1M1122 353h1M1106 362h1M1126 365h1M1133 365h1M1102 371h1M1098 374h1M1131 374h1M1142 374h1M1150 374h1M1102 404h1M1107 404h1M1112 404h1M1140 404h1M1145 404h1M1102 410h1M1107 410h1M1119 410h1M1086 461h1M1086 464h1M1094 464h1M1094 467h1M1095 467h1M1113 467h1M1089 470h1M1082 476h1M1093 485h1M1101 485h1M1114 485h1M1123 485h1M1133 491h1M1149 491h1M1102 494h1M1104 500h1M1117 503h1M1120 509h1M1136 509h1M1130 512h1M1156 512h1M1124 521h1M1134 521h1M1146 521h1M1094 527h1M1102 527h1M1113 527h1M1090 536h1M1098 536h1M1115 536h1M1116 536h1M1134 536h1M1140 536h1M1152 536h1M1094 548h1M1091 554h1M1089 557h1M1139 560h1M1118 566h1M1130 566h1" stroke="#101010" stroke-opacity="0.18" stroke-width="2" fill="none"/><path d="M1105 158h1M1099 161h1M1107 161h1M1130 161h1M1135 161h1M1141 161h1M1099 164h1M1104 164h1M1107 164h1M1102 170h1M1107 170h1M1095 185h1M1118 185h1M1150 185h1M1095 188h1M1096 188h1M1113 188h1M1095 200h1M1100 200h1M1103 200h1M1098 206h1M1103 206h1M1090 221h1M1096 221h1M1097 221h1M1090 227h1M1097 227h1M1091 230h1M1096 230h1M1099 230h1M1095 236h1M1100 236h1M1097 251h1M1099 251h1M1114 251h1M1116 251h1M1091 254h1M1096 254h1M1110 254h1M1115 254h1M1128 254h1M1130 254h1M1097 263h1M1101 263h1M1100 266h1M1104 266h1M1095 269h1M1100 269h1M1114 269h1M1119 269h1M1097 281h1M1098 281h1M1101 281h1M1100 284h1M1101 284h1M1104 284h1M1095 287h1M1100 287h1M1114 287h1M1119 287h1M1097 299h1M1095 302h1M1095 305h1M1100 305h1M1114 305h1M1119 305h1M1132 305h1M1104 311h1M1099 314h1M1104 314h1M1118 314h1M1123 314h1M1097 329h1M1113 329h1M1091 332h1M1096 332h1M1110 332h1M1115 332h1M1128 332h1M1124 341h1M1128 344h1M1124 350h1M1126 353h1M1129 353h1M1099 362h1M1107 362h1M1094 365h1M1105 365h1M1112 365h1M1127 365h1M1103 371h1M1099 374h1M1104 374h1M1114 374h1M1132 374h1M1137 374h1M1100 395h1M1090 401h1M1091 401h1M1115 404h2M1121 404h2M1124 404h1M1087 461h1M1098 461h1M1099 461h1M1087 464h1M1092 464h1M1095 464h1M1086 485h1M1094 485h1M1099 485h1M1102 485h1M1110 485h1M1115 485h1M1121 485h1M1100 491h1M1123 491h1M1134 491h1M1098 494h1M1081 500h1M1105 500h1M1114 500h1M1091 503h1M1096 509h1M1121 509h1M1126 509h1M1106 512h1M1131 512h1M1136 512h1M1121 518h1M1122 518h1M1094 521h1M1105 521h1M1109 521h1M1095 527h1M1100 527h1M1103 527h1M1105 527h1M1091 536h1M1096 536h1M1099 536h1M1090 548h1M1092 554h1M1090 557h1M1105 557h1M1106 557h1M1095 560h1M1094 566h1M1107 566h1M1111 566h1M1119 566h1M1124 566h1" stroke="#101010" stroke-opacity="0.39" stroke-width="2" fill="none"/><path d="M1093 149h1M1089 152h1M1092 158h1M1098 158h1M1110 158h1M1112 158h1M1117 158h1M1119 158h1M1126 158h1M1127 158h1M1128 158h1M1130 158h1M1112 161h1M1114 161h1M1119 161h1M1121 161h1M1128 161h1M1133 161h2M1138 161h1M1139 161h1M1144 161h1M1146 161h1M1148 161h2M1150 161h1M1151 161h1M1100 164h1M1105 164h1M1109 164h2M1112 164h1M1113 164h1M1098 167h2M1101 167h3M1105 170h2M1110 170h1M1111 170h1M1093 176h1M1089 179h1M1100 185h1M1102 185h1M1107 185h1M1109 185h1M1116 185h1M1128 185h1M1130 185h1M1135 185h1M1136 185h1M1162 185h1M1099 188h1M1104 188h1M1106 188h1M1111 188h1M1085 194h1M1092 194h1M1096 200h1M1101 200h1M1105 200h2M1108 200h1M1109 200h1M1094 203h2M1097 203h3M1101 206h2M1106 206h1M1107 206h1M1089 212h1M1085 218h1M1091 221h1M1095 221h1M1081 224h1M1084 227h1M1091 227h1M1095 227h1M1099 227h1M1100 227h1M1102 227h1M1092 230h1M1097 230h1M1101 230h2M1104 230h1M1105 230h1M1090 233h2M1093 233h3M1098 236h2M1103 236h1M1104 236h1M1085 242h1M1081 245h1M1077 248h1M1084 248h1M1084 251h1M1090 251h1M1098 251h1M1103 251h1M1115 251h1M1132 251h1M1138 251h1M1141 251h1M1152 251h1M1154 251h1M1092 254h1M1097 254h1M1099 254h2M1103 254h1M1113 254h2M1118 254h1M1119 254h1M1129 254h1M1134 254h1M1081 257h1M1084 263h1M1090 263h1M1098 263h2M1102 263h1M1104 263h1M1105 263h1M1107 263h1M1093 266h1M1101 266h2M1105 266h1M1117 266h1M1119 266h1M1096 269h1M1101 269h1M1103 269h2M1107 269h1M1117 269h2M1122 269h1M1123 269h1M1132 269h1M1085 272h1M1081 275h1M1084 281h1M1090 281h1M1106 281h1M1108 281h1M1109 281h1M1111 281h1M1093 284h1M1109 284h1M1126 284h1M1128 284h1M1096 287h1M1101 287h1M1103 287h2M1107 287h1M1117 287h2M1122 287h1M1123 287h1M1137 287h1M1085 290h1M1081 293h1M1084 299h1M1090 299h1M1099 299h2M1105 299h1M1106 299h1M1108 299h1M1088 302h1M1097 302h2M1115 302h1M1121 302h1M1124 302h1M1135 302h1M1137 302h1M1096 305h1M1101 305h1M1103 305h2M1107 305h1M1117 305h2M1122 305h1M1123 305h1M1134 305h2M1140 305h1M1085 308h1M1092 308h1M1097 311h1M1106 311h2M1124 311h1M1126 311h1M1100 314h1M1105 314h1M1107 314h2M1111 314h1M1121 314h2M1126 314h1M1127 314h1M1138 314h1M1089 317h1M1085 320h1M1081 323h1M1084 329h1M1090 329h1M1098 329h2M1102 329h1M1114 329h2M1130 329h1M1136 329h1M1139 329h1M1150 329h1M1152 329h1M1092 332h1M1097 332h1M1099 332h2M1103 332h1M1113 332h2M1118 332h1M1119 332h1M1129 332h2M1133 332h1M1081 335h1M1084 341h1M1102 341h1M1108 341h1M1111 341h1M1119 341h1M1121 341h1M1130 341h1M1102 344h1M1108 344h1M1111 344h1M1119 344h1M1121 344h1M1123 344h1M1126 344h2M1102 347h1M1108 347h1M1111 347h1M1119 347h1M1121 347h1M1124 347h1M1128 347h3M1102 350h1M1108 350h1M1111 350h1M1119 350h1M1121 350h1M1102 353h1M1108 353h1M1111 353h1M1119 353h1M1121 353h1M1125 353h1M1131 353h1M1133 353h1M1088 362h1M1110 362h1M1113 362h1M1120 362h1M1121 362h1M1122 362h1M1123 362h1M1125 362h1M1102 365h3M1110 365h1M1114 365h1M1116 365h1M1128 365h1M1130 365h2M1132 365h1M1097 371h1M1106 371h3M1112 371h1M1113 371h1M1123 371h1M1125 371h1M1100 374h1M1105 374h1M1111 374h1M1113 374h1M1117 374h2M1121 374h1M1135 374h2M1140 374h1M1141 374h1M1149 374h1M1089 377h1M1085 380h1M1081 383h1M1077 386h1M1073 389h1M1092 395h1M1098 395h2M1103 395h1M1109 395h1M1073 398h1M1080 401h1M1086 401h1M1088 401h1M1097 401h1M1099 401h1M1092 404h1M1098 404h1M1101 404h1M1113 404h1M1117 404h1M1123 404h1M1127 404h1M1132 404h2M1134 404h1M1142 404h1M1143 404h1M1144 404h1M1077 407h1M1084 407h1M1092 410h1M1098 410h1M1101 410h1M1112 410h1M1118 410h1M1077 413h1M1073 416h1M1090 455h2M1093 455h3M1097 455h1M1099 455h1M1102 455h1M1115 455h1M1073 458h1M1080 461h1M1095 461h1M1103 461h1M1105 461h1M1088 464h1M1093 464h1M1097 464h2M1100 464h1M1101 464h1M1086 467h2M1089 467h3M1081 476h1M1077 479h1M1095 485h1M1100 485h1M1105 485h1M1109 485h1M1112 485h1M1113 485h1M1118 485h1M1120 485h1M1122 485h1M1110 491h1M1112 491h1M1117 491h1M1119 491h1M1124 491h1M1126 491h1M1127 491h1M1139 491h1M1141 491h1M1146 491h1M1148 491h1M1100 494h1M1101 494h1M1080 500h1M1107 500h1M1110 500h1M1115 500h1M1118 500h1M1119 500h1M1120 500h1M1122 500h1M1084 506h1M1093 506h1M1095 506h1M1124 509h2M1134 509h1M1135 509h1M1134 512h2M1144 512h1M1147 512h1M1152 512h1M1154 512h1M1155 512h1M1093 518h1M1132 518h1M1134 518h1M1104 521h1M1108 521h1M1110 521h1M1111 521h1M1145 521h1M1096 527h1M1101 527h1M1104 527h1M1106 527h1M1107 527h1M1112 527h1M1085 530h1M1081 533h1M1088 533h1M1092 536h1M1097 536h1M1101 536h2M1104 536h1M1105 536h1M1107 536h2M1110 536h3M1151 536h1M1081 539h1M1077 542h1M1092 548h1M1093 548h1M1085 554h1M1097 554h1M1099 554h1M1104 554h1M1114 554h1M1116 554h1M1084 557h1M1093 557h1M1101 557h1M1102 557h1M1103 557h1M1109 557h1M1111 557h1M1088 563h1M1097 563h1M1099 563h1M1104 566h1M1106 566h1M1110 566h1M1112 566h1M1113 566h1M1122 566h2M1127 566h1M1128 566h1M1129 566h1" stroke="#101010" stroke-opacity="0.52" stroke-width="2" fill="none"/><path d="M1106 158h4M1111 158h1M1113 158h1M1115 158h2M1118 158h1M1108 161h4M1113 161h1M1115 161h1M1117 161h2M1120 161h1M1131 161h2M1136 161h2M1142 161h2M1145 161h1M1147 161h1M1101 164h3M1108 164h1M1111 164h1M1100 167h1M1104 167h2M1103 170h2M1108 170h2M1096 185h4M1101 185h1M1103 185h1M1105 185h2M1108 185h1M1124 185h4M1129 185h1M1131 185h1M1133 185h2M1151 185h2M1154 185h1M1097 188h2M1100 188h4M1105 188h1M1107 188h1M1109 188h2M1097 200h3M1104 200h1M1107 200h1M1096 203h1M1100 203h2M1099 206h2M1104 206h2M1092 221h3M1092 227h3M1093 230h3M1100 230h1M1103 230h1M1092 233h1M1096 233h2M1096 236h2M1101 236h2M1100 251h3M1117 251h3M1133 251h1M1135 251h3M1139 251h2M1144 251h3M1149 251h1M1151 251h1M1093 254h3M1098 254h1M1101 254h2M1111 254h2M1116 254h2M1131 254h3M1100 263h1M1103 263h1M1103 266h1M1106 266h1M1097 269h3M1102 269h1M1105 269h2M1115 269h2M1120 269h2M1100 281h1M1102 281h1M1104 281h2M1107 281h1M1103 284h1M1105 284h1M1107 284h2M1110 284h1M1097 287h3M1102 287h1M1105 287h2M1115 287h2M1120 287h2M1098 299h1M1101 299h4M1096 302h1M1099 302h4M1116 302h1M1118 302h3M1122 302h2M1127 302h3M1132 302h1M1134 302h1M1097 305h3M1102 305h1M1105 305h2M1115 305h2M1120 305h2M1133 305h1M1136 305h4M1105 311h1M1108 311h4M1101 314h3M1106 314h1M1109 314h2M1119 314h2M1124 314h2M1100 329h2M1116 329h2M1131 329h1M1133 329h3M1137 329h2M1142 329h3M1147 329h1M1149 329h1M1093 332h3M1098 332h1M1101 332h2M1111 332h2M1116 332h2M1131 332h2M1103 341h1M1105 341h3M1109 341h2M1114 341h3M1118 341h1M1123 341h1M1125 341h3M1129 341h1M1131 341h3M1103 344h1M1105 344h3M1109 344h2M1114 344h3M1118 344h1M1124 344h2M1129 344h2M1103 347h1M1105 347h3M1109 347h2M1114 347h3M1118 347h1M1123 347h1M1125 347h3M1103 350h1M1105 350h3M1109 350h2M1114 350h3M1118 350h1M1123 350h1M1125 350h3M1103 353h1M1105 353h3M1109 353h2M1114 353h3M1120 353h1M1123 353h2M1127 353h2M1130 353h1M1108 362h2M1112 362h1M1114 362h2M1118 362h2M1101 365h1M1106 365h2M1109 365h1M1113 365h1M1115 365h1M1129 365h1M1104 371h2M1109 371h3M1101 374h3M1106 374h5M1112 374h1M1115 374h2M1119 374h2M1133 374h2M1138 374h2M1090 395h2M1094 395h1M1096 395h2M1101 395h2M1093 404h1M1095 404h3M1099 404h2M1104 404h3M1109 404h1M1111 404h1M1114 404h1M1119 404h2M1125 404h2M1128 404h4M1093 410h1M1095 410h3M1099 410h2M1104 410h3M1109 410h1M1111 410h1M1089 455h1M1092 455h1M1096 455h1M1098 455h1M1100 455h2M1088 461h2M1091 461h4M1096 461h1M1089 464h3M1096 464h1M1099 464h1M1088 467h1M1092 467h2M1096 485h3M1103 485h2M1106 485h3M1111 485h1M1116 485h2M1119 485h1M1106 491h4M1111 491h1M1113 491h1M1115 491h2M1118 491h1M1120 491h3M1125 491h1M1135 491h4M1140 491h1M1142 491h1M1144 491h2M1147 491h1M1106 500h1M1108 500h2M1111 500h3M1116 500h2M1122 509h2M1127 509h3M1131 509h3M1132 512h2M1137 512h2M1140 512h1M1142 512h2M1146 512h1M1148 512h1M1150 512h2M1153 512h1M1100 521h1M1102 521h2M1106 521h2M1097 527h3M1093 536h3M1100 536h1M1103 536h1M1109 536h1M1113 536h2M1093 554h4M1098 554h1M1100 554h1M1102 554h2M1105 554h1M1091 557h2M1094 557h7M1101 566h1M1103 566h1M1105 566h1M1108 566h2M1120 566h2M1125 566h2" stroke="#101010" stroke-opacity="0.68" stroke-width="2" fill="none"/><path d="M1114 158h1M1116 161h1M1097 167h1M1104 185h1M1132 185h1M1153 185h1M1108 188h1M1093 203h1M1089 233h1M1105 251h1M1106 251h1M1134 251h1M1143 251h1M1148 251h1M1150 251h1M1099 281h1M1103 281h1M1102 284h1M1106 284h1M1117 302h1M1126 302h1M1131 302h1M1133 302h1M1104 329h1M1105 329h1M1132 329h1M1141 329h1M1146 329h1M1148 329h1M1104 341h1M1113 341h1M1120 341h1M1128 341h1M1104 344h1M1113 344h1M1120 344h1M1104 347h1M1113 347h1M1120 347h1M1104 350h1M1113 350h1M1120 350h1M1104 353h1M1113 353h1M1118 353h1M1111 362h1M1116 362h2M1100 365h1M1108 365h1M1111 365h1M1093 395h1M1095 395h1M1087 401h1M1094 404h1M1103 404h1M1108 404h1M1110 404h1M1118 404h1M1094 410h1M1103 410h1M1108 410h1M1110 410h1M1090 461h1M1085 467h1M1114 491h1M1143 491h1M1130 509h1M1139 512h1M1141 512h1M1145 512h1M1149 512h1M1101 521h1M1106 536h1M1101 554h1M1108 557h1M1100 566h1M1102 566h1" stroke="#101010" stroke-opacity="0.85" stroke-width="2" fill="none"/><path d="M1117 167h1M1113 203h1M1105 233h1M1115 233h1M1103 467h1M1129 536h1" stroke="#101010" stroke-opacity="0.18" stroke-width="2" fill="none"/><path d="M1112 167h1M1120 167h1M1104 233h1M1097 467h1M1100 467h1M1118 536h1M1125 536h1" stroke="#101010" stroke-opacity="0.39" stroke-width="2" fill="none"/><path d="M1111 167h1M1115 167h1M1119 167h1M1102 233h2M1107 233h1M1109 233h1M1114 233h1" stroke="#101010" stroke-opacity="0.52" stroke-width="2" fill="none"/><path d="M1109 167h2M1113 167h2M1118 167h1M1121 167h2M1105 203h1M1108 203h4M1114 203h2M1101 233h1M1106 233h1M1108 233h1M1116 233h2M1098 467h2M1105 467h1M1108 467h4M1119 536h2M1123 536h1M1126 536h1M1130 536h2M1133 536h1" stroke="#101010" stroke-opacity="0.68" stroke-width="2" fill="none"/><path d="M1108 167h1M1116 167h1M1104 203h1M1106 203h2M1112 203h1M1116 203h1M1100 233h1M1110 233h4M1118 233h1M1096 467h1M1101 467h2M1104 467h1M1106 467h2M1112 467h1M1117 536h1M1121 536h2M1124 536h1M1127 536h2M1132 536h1" stroke="#101010" stroke-opacity="0.85" stroke-width="2" fill="none"/><path d="M1097 197h1M1140 197h1M1114 359h1M1122 359h1M1103 425h1M1098 431h1M1083 434h1M1088 437h1M1093 443h1M1088 449h1M1099 449h1" stroke="#8c8c8c" stroke-opacity="0.14" stroke-width="2" fill="none"/><path d="M1092 197h1M1105 197h1M1110 197h1M1145 197h1M1152 197h1M1086 359h2M1099 359h1M1127 359h1M1074 422h2M1074 425h1M1078 425h2M1102 425h1M1074 428h1M1074 431h1M1085 431h1M1095 431h1M1074 434h1M1077 434h1M1081 434h2M1106 434h1M1074 437h1M1077 437h1M1085 437h1M1097 437h1M1120 437h1M1074 440h1M1074 443h1M1074 446h1M1074 449h1M1086 449h2M1074 452h1" stroke="#8c8c8c" stroke-opacity="0.29" stroke-width="2" fill="none"/><path d="M1089 197h2M1098 197h1M1106 197h1M1108 197h1M1114 197h2M1117 197h1M1119 197h1M1124 197h1M1126 197h1M1135 197h1M1137 197h1M1146 197h1M1162 197h1M1167 197h2M1170 197h1M1085 359h1M1090 359h1M1092 359h1M1097 359h1M1101 359h1M1104 359h1M1110 359h1M1113 359h1M1121 359h1M1125 359h1M1128 359h1M1073 422h1M1085 425h1M1089 425h2M1092 425h1M1094 425h2M1097 425h1M1099 425h1M1078 431h1M1080 431h1M1083 431h1M1094 431h1M1096 431h1M1098 434h1M1100 434h1M1080 437h1M1083 437h1M1102 437h1M1104 437h1M1107 437h1M1111 437h1M1113 437h1M1115 437h1M1118 437h1M1079 443h1M1083 443h1M1089 443h1M1092 443h1M1098 443h2M1109 443h2M1112 443h1M1115 443h1M1077 449h1M1079 449h1M1081 449h1M1089 449h1M1095 449h1M1098 449h1M1104 449h2M1108 449h2M1111 449h1M1114 449h1M1075 452h1" stroke="#8c8c8c" stroke-opacity="0.39" stroke-width="2" fill="none"/><path d="M1094 197h3M1100 197h3M1109 197h1M1111 197h1M1113 197h1M1116 197h1M1120 197h2M1123 197h1M1125 197h1M1128 197h2M1131 197h4M1136 197h1M1138 197h2M1142 197h2M1148 197h4M1153 197h1M1155 197h2M1158 197h1M1160 197h2M1163 197h2M1166 197h1M1169 197h1M1091 359h1M1095 359h2M1100 359h1M1102 359h1M1105 359h1M1107 359h3M1111 359h2M1115 359h2M1119 359h2M1124 359h1M1076 425h2M1080 425h2M1083 425h2M1086 425h1M1088 425h1M1091 425h1M1096 425h1M1098 425h1M1100 425h2M1077 431h1M1079 431h1M1081 431h1M1084 431h1M1086 431h2M1089 431h2M1092 431h2M1097 431h1M1079 434h2M1091 434h5M1097 434h1M1099 434h1M1101 434h1M1103 434h2M1107 434h1M1079 437h1M1081 437h2M1086 437h2M1091 437h5M1098 437h1M1100 437h2M1105 437h1M1108 437h2M1112 437h1M1114 437h1M1116 437h1M1119 437h1M1121 437h2M1077 443h2M1080 443h1M1084 443h1M1086 443h3M1090 443h2M1095 443h3M1102 443h5M1108 443h1M1111 443h1M1114 443h1M1117 443h5M1078 449h1M1080 449h1M1082 449h1M1084 449h2M1090 449h1M1092 449h3M1096 449h2M1101 449h3M1107 449h1M1110 449h1M1113 449h1M1116 449h5" stroke="#8c8c8c" stroke-opacity="0.52" stroke-width="2" fill="none"/><path d="M1103 197h1M1089 359h1M1094 359h1M1098 359h1M1106 359h1M1117 359h2M1123 359h1M1076 431h1M1091 431h1M1090 434h1M1084 437h1M1090 437h1M1076 443h1M1081 443h1M1085 443h1M1094 443h1M1101 443h1M1076 449h1M1091 449h1M1100 449h1" stroke="#8c8c8c" stroke-opacity="0.64" stroke-width="2" fill="none"/><path d="M1089 158h1M1093 158h1M1088 194h1M1081 227h1M1080 248h1M1081 251h1M1085 251h1M1121 251h1M1081 263h1M1085 263h1M1081 281h1M1085 281h1M1081 299h1M1085 299h1M1085 302h1M1104 302h1M1088 308h1M1081 329h1M1085 329h1M1119 329h1M1081 341h1M1091 341h1M1091 344h1M1091 347h1M1091 350h1M1091 353h1M1085 362h1M1075 395h1M1086 395h1M1077 401h1M1080 407h1M1076 455h2M1085 455h1M1077 461h1M1087 470h2M1077 500h1M1081 506h1M1084 533h1M1138 536h2M1081 557h1M1085 563h1" stroke="#1818a8" stroke-opacity="0.39" stroke-width="2" fill="none"/><path d="M1090 158h1M1097 158h1M1089 215h1M1091 215h1M1093 215h1M1082 227h1M1082 251h1M1089 251h1M1124 251h1M1127 251h1M1130 251h1M1082 263h1M1089 263h1M1085 266h1M1087 266h1M1090 266h1M1082 281h1M1089 281h1M1085 284h1M1087 284h1M1090 284h1M1082 299h1M1089 299h1M1086 302h1M1107 302h1M1110 302h1M1113 302h1M1089 311h1M1091 311h1M1094 311h1M1082 329h1M1089 329h1M1122 329h1M1125 329h1M1128 329h1M1082 341h1M1094 341h1M1097 341h1M1100 341h1M1094 344h1M1097 344h1M1100 344h1M1094 347h1M1097 347h1M1100 347h1M1094 350h1M1097 350h1M1100 350h1M1094 353h1M1097 353h1M1100 353h1M1086 362h1M1089 371h1M1091 371h1M1094 371h1M1074 395h1M1076 395h1M1078 395h1M1081 395h1M1084 395h2M1078 401h1M1081 404h1M1083 404h1M1085 404h1M1081 410h1M1083 410h1M1085 410h1M1078 455h1M1080 455h1M1083 455h2M1104 455h2M1107 455h1M1078 461h1M1078 500h1M1082 506h1M1085 518h1M1087 518h1M1090 518h1M1077 554h1M1079 554h1M1082 554h1M1082 557h1M1086 563h1" stroke="#1818a8" stroke-opacity="0.52" stroke-width="2" fill="none"/><path d="M1094 158h3M1120 185h2M1087 194h1M1089 194h2M1090 215h1M1092 215h1M1094 215h1M1079 248h1M1081 248h2M1086 251h3M1122 251h2M1125 251h2M1128 251h2M1086 263h3M1086 266h1M1088 266h2M1091 266h1M1108 266h2M1086 281h3M1086 284h1M1088 284h2M1091 284h1M1112 284h2M1086 299h3M1105 302h2M1108 302h2M1111 302h2M1087 308h1M1089 308h2M1090 311h1M1092 311h2M1095 311h1M1113 311h2M1086 329h3M1120 329h2M1123 329h2M1126 329h2M1092 341h2M1095 341h2M1098 341h2M1092 344h2M1095 344h2M1098 344h2M1092 347h2M1095 347h2M1098 347h2M1092 350h2M1095 350h2M1098 350h2M1092 353h2M1095 353h2M1098 353h2M1096 365h2M1090 371h1M1092 371h2M1095 371h1M1115 371h2M1073 395h1M1077 395h1M1079 395h1M1082 395h2M1087 395h2M1082 404h1M1084 404h1M1086 404h1M1088 404h2M1079 407h1M1081 407h2M1082 410h1M1084 410h1M1086 410h1M1088 410h2M1073 455h3M1081 455h2M1086 455h2M1103 455h1M1106 455h1M1085 470h2M1102 491h2M1086 518h1M1088 518h2M1091 518h1M1105 518h2M1096 521h2M1083 533h1M1085 533h2M1136 536h2M1078 554h1M1080 554h2M1083 554h1M1107 554h2M1096 566h2" stroke="#1818a8" stroke-opacity="0.68" stroke-width="2" fill="none"/><path d="M1122 185h1M1098 365h1M1090 404h1M1090 410h1M1104 491h1M1098 521h1M1098 566h1" stroke="#1818a8" stroke-opacity="0.85" stroke-width="2" fill="none"/><path d="M1097 173h1M1104 173h1M1111 173h1M1144 173h1M1093 209h1M1117 209h1M1089 239h1M1135 239h1M1093 401h1M1096 401h1M1101 461h2M1085 473h1M1127 473h1M1093 503h1M1116 503h1M1097 560h1M1103 560h1M1108 560h1M1119 560h1M1138 560h1" stroke="#109010" stroke-opacity="0.18" stroke-width="2" fill="none"/><path d="M1099 173h2M1107 173h2M1113 173h1M1117 173h1M1124 173h1M1134 173h2M1140 173h2M1096 209h1M1092 239h1M1094 239h1M1096 239h1M1104 239h1M1121 239h1M1125 239h1M1100 473h2M1108 473h1M1112 503h1M1109 560h1M1121 560h1M1130 560h1" stroke="#109010" stroke-opacity="0.39" stroke-width="2" fill="none"/><path d="M1118 173h1M1122 173h1M1097 209h1M1099 209h1M1109 209h1M1111 209h1M1116 209h1M1093 239h1M1112 239h1M1114 239h1M1119 239h1M1127 239h1M1130 239h1M1094 401h2M1087 473h1M1089 473h2M1095 473h2M1099 473h1M1113 473h1M1125 473h1M1100 503h1M1105 503h1M1108 503h1M1113 503h1M1098 560h2M1112 560h1M1117 560h2M1126 560h1" stroke="#109010" stroke-opacity="0.52" stroke-width="2" fill="none"/><path d="M1098 173h1M1101 173h2M1106 173h1M1109 173h2M1114 173h1M1116 173h1M1119 173h3M1125 173h1M1127 173h3M1131 173h2M1136 173h2M1142 173h2M1095 209h1M1098 209h1M1101 209h2M1104 209h3M1108 209h1M1110 209h1M1112 209h1M1114 209h2M1091 239h1M1095 239h1M1097 239h1M1099 239h4M1105 239h1M1107 239h3M1111 239h1M1113 239h1M1115 239h1M1117 239h2M1122 239h1M1124 239h1M1126 239h1M1128 239h2M1131 239h4M1088 473h1M1092 473h3M1097 473h1M1102 473h1M1104 473h4M1109 473h1M1111 473h2M1114 473h1M1116 473h1M1118 473h2M1121 473h4M1126 473h1M1094 503h4M1099 503h1M1101 503h1M1103 503h2M1107 503h1M1109 503h3M1114 503h2M1100 560h2M1105 560h3M1110 560h2M1114 560h1M1116 560h1M1122 560h1M1124 560h2M1128 560h2M1131 560h2M1134 560h4" stroke="#109010" stroke-opacity="0.68" stroke-width="2" fill="none"/><path d="M1105 173h1M1139 173h1M1094 209h1M1100 209h1M1113 209h1M1090 239h1M1116 239h1M1086 473h1M1120 473h1M1104 560h1M1113 560h1M1115 560h1" stroke="#109010" stroke-opacity="0.85" stroke-width="2" fill="none"/><path d="M1102 158h1M1122 158h2M1094 161h2M1104 161h1M1124 161h2M1096 164h1M1092 185h1M1112 185h2M1139 185h2M1158 185h2M1092 188h1M1092 200h1M1088 230h1M1088 254h1M1115 266h1M1092 269h1M1130 269h1M1116 284h1M1119 284h1M1092 287h1M1127 287h1M1130 287h1M1092 305h1M1096 314h1M1088 332h1M1094 362h1M1122 365h1M1096 374h1M1127 374h1M1084 461h1M1084 464h1M1083 485h1M1091 485h1M1095 491h1M1131 491h1M1078 494h2M1100 500h1M1091 506h1M1086 509h2M1116 509h1M1086 512h2M1126 512h1M1095 518h2M1117 518h1M1129 518h1M1091 521h1M1121 521h1M1131 521h1M1092 527h1M1110 527h1M1088 536h1M1089 554h1M1095 563h1M1091 566h1" stroke="#961818" stroke-opacity="0.39" stroke-width="2" fill="none"/><path d="M1100 158h1M1102 161h1M1094 164h1M1090 185h1M1090 188h1M1090 200h1M1086 230h1M1086 254h1M1112 266h2M1116 266h1M1090 269h1M1127 269h2M1131 269h1M1124 284h1M1090 287h1M1135 287h1M1090 305h1M1118 311h2M1094 314h1M1132 314h2M1086 332h1M1092 362h1M1096 362h1M1092 365h1M1120 365h1M1124 365h1M1101 371h1M1119 371h2M1094 374h1M1125 374h1M1129 374h1M1145 374h2M1082 461h1M1082 464h1M1080 485h1M1082 485h1M1084 485h1M1089 485h1M1082 491h1M1084 491h1M1089 491h1M1091 491h1M1096 491h1M1098 491h1M1129 491h1M1087 494h1M1090 494h1M1095 494h1M1087 500h1M1089 500h1M1094 500h1M1096 500h1M1101 500h1M1103 500h1M1083 503h2M1086 503h1M1088 506h1M1090 506h1M1092 506h1M1103 509h1M1105 509h1M1110 509h1M1112 509h1M1117 509h1M1119 509h1M1095 512h1M1098 512h1M1103 512h1M1113 512h1M1115 512h1M1120 512h1M1122 512h1M1127 512h1M1129 512h1M1109 518h1M1111 518h2M1115 518h2M1128 518h1M1090 521h1M1092 521h1M1113 521h1M1115 521h2M1119 521h2M1130 521h1M1138 521h2M1141 521h1M1090 527h1M1109 527h1M1111 527h1M1086 536h1M1144 536h2M1147 536h1M1084 548h2M1087 554h1M1087 560h2M1090 560h1M1092 563h1M1094 563h1M1096 563h1M1090 566h1M1092 566h1" stroke="#961818" stroke-opacity="0.52" stroke-width="2" fill="none"/><path d="M1101 158h1M1103 158h1M1121 158h1M1124 158h2M1096 161h2M1103 161h1M1105 161h1M1123 161h1M1126 161h2M1095 164h1M1097 164h1M1098 170h3M1091 185h1M1093 185h1M1111 185h1M1114 185h2M1138 185h1M1141 185h2M1146 185h3M1160 185h2M1091 188h1M1093 188h1M1116 188h3M1091 200h1M1093 200h1M1094 206h3M1086 221h3M1086 227h3M1087 230h1M1089 230h1M1090 236h4M1092 251h4M1109 251h4M1087 254h1M1089 254h1M1105 254h4M1123 254h4M1092 263h4M1095 266h4M1114 266h1M1091 269h1M1093 269h1M1109 269h4M1129 269h1M1092 281h4M1095 284h4M1118 284h1M1120 284h1M1122 284h2M1125 284h1M1091 287h1M1093 287h1M1109 287h4M1129 287h1M1131 287h1M1133 287h2M1136 287h1M1092 299h4M1090 302h4M1091 305h1M1093 305h1M1109 305h4M1127 305h4M1099 311h4M1117 311h1M1120 311h4M1095 314h1M1097 314h1M1113 314h4M1131 314h1M1134 314h4M1092 329h4M1108 329h4M1087 332h1M1089 332h1M1105 332h4M1123 332h4M1086 341h4M1086 344h4M1086 347h4M1086 350h4M1086 353h4M1090 362h2M1095 362h1M1097 362h1M1102 362h4M1090 365h2M1118 365h2M1123 365h1M1125 365h1M1099 371h2M1121 371h2M1095 374h1M1097 374h1M1123 374h2M1128 374h1M1130 374h1M1147 374h2M1105 395h2M1108 395h1M1082 401h2M1085 401h1M1136 404h2M1139 404h1M1114 410h2M1117 410h1M1110 455h5M1083 461h1M1085 461h1M1083 464h1M1085 464h1M1078 485h2M1081 485h1M1090 485h1M1092 485h1M1078 491h4M1083 491h1M1085 491h1M1087 491h2M1090 491h1M1092 491h3M1097 491h1M1130 491h1M1132 491h1M1080 494h2M1083 494h1M1085 494h2M1089 494h1M1091 494h1M1093 494h2M1096 494h1M1083 500h4M1088 500h1M1090 500h1M1092 500h2M1095 500h1M1097 500h3M1102 500h1M1082 503h1M1085 503h1M1088 503h2M1086 506h2M1089 506h1M1088 509h3M1092 509h3M1099 509h4M1104 509h1M1106 509h1M1108 509h2M1111 509h1M1113 509h3M1118 509h1M1088 512h2M1091 512h1M1093 512h2M1097 512h1M1099 512h1M1101 512h2M1104 512h1M1109 512h4M1114 512h1M1116 512h1M1118 512h2M1121 512h1M1123 512h3M1128 512h1M1097 518h3M1101 518h3M1110 518h1M1113 518h2M1118 518h2M1125 518h2M1130 518h2M1114 521h1M1117 521h2M1122 521h2M1127 521h2M1132 521h2M1137 521h1M1140 521h1M1143 521h2M1091 527h1M1093 527h1M1087 536h1M1089 536h1M1143 536h1M1146 536h1M1149 536h2M1078 548h6M1086 548h3M1088 554h1M1090 554h1M1111 554h3M1086 557h3M1086 560h1M1089 560h1M1092 560h2M1090 563h2M1093 563h1M1115 566h3" stroke="#961818" stroke-opacity="0.68" stroke-width="2" fill="none"/><path d="M1099 158h1M1120 158h1M1093 161h1M1101 161h1M1122 161h1M1093 164h1M1097 170h1M1089 185h1M1110 185h1M1137 185h1M1145 185h1M1157 185h1M1089 188h1M1115 188h1M1089 200h1M1093 206h1M1085 221h1M1085 227h1M1085 230h1M1089 236h1M1091 251h1M1108 251h1M1085 254h1M1104 254h1M1122 254h1M1091 263h1M1094 266h1M1111 266h1M1089 269h1M1108 269h1M1126 269h1M1091 281h1M1094 284h1M1115 284h1M1117 284h1M1121 284h1M1089 287h1M1108 287h1M1126 287h1M1128 287h1M1132 287h1M1091 299h1M1089 302h1M1089 305h1M1108 305h1M1126 305h1M1098 311h1M1116 311h1M1093 314h1M1112 314h1M1130 314h1M1091 329h1M1107 329h1M1085 332h1M1104 332h1M1122 332h1M1085 341h1M1085 344h1M1085 347h1M1085 350h1M1085 353h1M1089 362h1M1093 362h1M1101 362h1M1089 365h1M1117 365h1M1121 365h1M1098 371h1M1118 371h1M1093 374h1M1122 374h1M1126 374h1M1144 374h1M1104 395h1M1107 395h1M1081 401h1M1084 401h1M1135 404h1M1138 404h1M1113 410h1M1116 410h1M1109 455h1M1081 461h1M1081 464h1M1077 485h1M1088 485h1M1077 491h1M1086 491h1M1128 491h1M1077 494h1M1082 494h1M1084 494h1M1088 494h1M1092 494h1M1082 500h1M1091 500h1M1081 503h1M1087 503h1M1085 506h1M1085 509h1M1091 509h1M1098 509h1M1107 509h1M1085 512h1M1090 512h1M1092 512h1M1096 512h1M1100 512h1M1108 512h1M1117 512h1M1094 518h1M1100 518h1M1108 518h1M1124 518h1M1127 518h1M1089 521h1M1112 521h1M1126 521h1M1129 521h1M1136 521h1M1142 521h1M1089 527h1M1108 527h1M1085 536h1M1142 536h1M1148 536h1M1077 548h1M1086 554h1M1110 554h1M1085 557h1M1085 560h1M1091 560h1M1089 563h1M1089 566h1M1114 566h1" stroke="#961818" stroke-opacity="0.85" stroke-width="2" fill="none"/></svg></div>
<svg class="abs" style="left:26px;top:148px" width="1152" height="1"><path d="M0 .5H1152" stroke="#8a8a8a" stroke-dasharray="1 1"/></svg>
<div class="abs" style="left:26px;top:566px;width:1152px;height:1px;background:#9c9c9c"></div>
<div class="abs" style="left:26px;top:567px;width:1152px;height:21px;background:linear-gradient(#e6e6e6,#d4d4d4)"></div>
<div class="abs" style="left:26px;top:588px;width:1152px;height:1px;background:#9c9c9c"></div>
<span class="abs t" style="left:30.30px;top:570px;font:11px 'DejaVu Sans',Liberation Sans,sans-serif;line-height:15px;letter-spacing:0.228px;color:#484848;">Event Log</span>
<div class="abs" style="left:26px;top:589px;width:29px;height:90px;background:#e6e6e6"></div>
<div class="abs" style="left:55px;top:589px;width:1px;height:90px;background:#b4b4b4"></div>
<div class="abs" style="left:56px;top:589px;width:1102px;height:90px;background:#fff"></div>
<div class="abs" style="left:1158px;top:589px;width:20px;height:90px;background:#f3f3f3;border-left:1px solid #e2e2e2;box-sizing:border-box"></div>
<svg class="abs" style="left:32px;top:595px" width="16" height="16" viewBox="0 0 16 16" ><path d="M15 3.800l-2.400 2.400-2-.4-.4-2 2.400-2.400c-2-.6-4.200.2-5 2.200-.4 1-.3 2 0 2.800L2.800 11.200c-.9.900-.9 2-.2 2.700.7.700 1.800.7 2.700-.2l4.800-4.800c.9.300 1.900.3 2.800-.1 1.900-.8 2.700-2.900 2.100-5z" fill="#8c8c8c"/><path d="M3.900 0.300l3.200 1.800v3.700L3.900 7.600 0.700 5.800V2.100z" fill="#d08a3c"/><circle cx="3.900" cy="3.950" r="1.500" fill="#e6e6e6"/></svg>
<div class="abs" style="left:28px;top:616px;width:24px;height:24px;background:#8c8c8c;border:1px solid #6e6e6e;border-radius:3px;box-sizing:border-box"></div>
<svg class="abs" style="left:32px;top:620px" width="16" height="16" viewBox="0 0 16 16" ><path d="M2.500 1.500h11a1 1 0 0 1 1 1v7a1 1 0 0 1-1 1H9.500l.600 3.800L6 10.500H2.500a1 1 0 0 1-1-1v-7a1 1 0 0 1 1-1z" fill="#9aa4ac" stroke="#3d8ec9" stroke-width="1.600"/></svg>
<svg class="abs" style="left:32px;top:645px" width="16" height="16" viewBox="0 0 16 16" ><path d="M1 3h8M1 8.500h3M1 14h8" stroke="#555" stroke-width="1.300"/><path d="M1.600 6v5" stroke="#555" stroke-width="1.200"/><path d="M10 3h3.500v3M13.500 11v3H10" fill="none" stroke="#3d8ec9" stroke-width="1.300"/><path d="M11.500 4.500l2 2.500 2-2.500zM11.500 12.500l-2.500 1.500 2.500 1.500z" fill="#3d8ec9"/><path d="M5 8.500h6" stroke="#3d8ec9" stroke-width="1.300"/><path d="M7 6.500L4.500 8.500 7 10.500z" fill="#3d8ec9"/></svg>
<svg class="abs" style="left:38px;top:668px" width="9" height="6" viewBox="0 0 9 6" ><path d="M1 0.600L3.200 2.700 1 4.800M4.800 0.600L7 2.700 4.800 4.800" fill="none" stroke="#7a7a7a" stroke-width="0.900"/></svg>
<svg class="abs" style="left:1130px;top:570px" width="14" height="14" viewBox="0 0 14 14" ><g fill="#7a7a7a"><circle cx="7" cy="7" r="4.300"/><rect x="5.900" y="0.600" width="2.200" height="12.800"/><rect x="5.900" y="0.600" width="2.200" height="12.800" transform="rotate(45 7 7)"/><rect x="5.900" y="0.600" width="2.200" height="12.800" transform="rotate(90 7 7)"/><rect x="5.900" y="0.600" width="2.200" height="12.800" transform="rotate(135 7 7)"/></g><circle cx="7" cy="7" r="1.900" fill="#dcdcdc"/></svg>
<svg class="abs" style="left:1145px;top:576px" width="6" height="3" viewBox="0 0 6 3" ><path d="M0 0h6L3 3z" fill="#7a7a7a"/></svg>
<svg class="abs" style="left:1159px;top:570px" width="12" height="14" viewBox="0 0 12 14" ><path d="M6 .5v7" stroke="#7a7a7a" stroke-width="1.200"/><path d="M3.200 6.300h5.600L6 9.800z" fill="#7a7a7a"/><rect x=".5" y="10.500" width="11" height="3" fill="#7a7a7a"/></svg>
<div class="abs" style="left:3px;top:679px;width:1175px;height:1px;background:#9c9c9c"></div>
<div class="abs" style="left:3px;top:680px;width:1175px;height:24px;background:#e1e1e1"></div>
<svg class="abs" style="left:39px;top:684px" width="16" height="16" viewBox="0 0 16 16" ><circle cx="5" cy="4.200" r="3.600" fill="#f4f4f4" stroke="#6a6a6a" stroke-width="1"/><path d="M3 3.400h4M3 5.200h4" stroke="#6a6a6a" stroke-width=".9"/><circle cx="10.200" cy="8.600" r="3.700" fill="#f0c090"/><path d="M6.400 8a3.900 3.900 0 0 1 7.700-.4c-1.400.1-3.600-.5-4.500-1.700-.6 1.200-1.800 2-3.200 2.100z" fill="#4a4a4a"/><path d="M5.600 16c0-2.800 2-4 4.600-4s4.600 1.200 4.600 4z" fill="#3d8ec9"/></svg>
<span class="abs t" style="left:57.50px;top:685px;font:11px 'DejaVu Sans',Liberation Sans,sans-serif;line-height:15px;letter-spacing:-0.125px;color:#000;"><u>6</u>: TODO</span>
<svg class="abs" style="left:126px;top:684px" width="16" height="16" viewBox="0 0 16 16" ><rect x="1" y="1" width="10" height="10" fill="#4c8ccc"/><circle cx="9.400" cy="9.600" r="5.600" fill="#e8a040"/><path d="M9.400 9.600V4A5.600 5.600 0 0 0 3.800 9.600z" fill="#3aa84a"/></svg>
<span class="abs t" style="left:145.00px;top:685px;font:11px 'DejaVu Sans',Liberation Sans,sans-serif;line-height:15px;letter-spacing:0.232px;color:#000;"><u>9</u>: Changes</span>
<div class="abs" style="left:1057px;top:682px;width:93px;height:20px;background:#c8c8c8;border:1px solid #8c8c8c;box-sizing:border-box;box-shadow:inset 1px 1px 0 #b4b4b4"></div>
<svg class="abs" style="left:1070px;top:685px" width="14" height="13" viewBox="0 0 14 13" ><path d="M2 .8h10.400a1 1 0 0 1 1 1v6.400a1 1 0 0 1-1 1H8.800l.500 3.200L5.600 9.200H2a1 1 0 0 1-1-1V1.800a1 1 0 0 1 1-1z" fill="#9a9a9a"/></svg>
<span class="abs t" style="left:1088.70px;top:685px;font:11px 'DejaVu Sans',Liberation Sans,sans-serif;line-height:15px;letter-spacing:0.203px;color:#000;">Event Log</span>
<div class="abs" style="left:3px;top:704px;width:1175px;height:1px;background:#8c8c8c"></div>
<div class="abs" style="left:3px;top:705px;width:1175px;height:23px;background:#e0e0e0"></div>
<div class="abs" style="left:3px;top:705px;width:1175px;height:1px;background:#fafafa"></div>
<div class="abs" style="left:8px;top:708px;width:14px;height:12px;border:1px solid #6e737b;background:#c0c4cc;box-sizing:border-box;box-shadow:inset 1px 1px 0 #f0f0f4"></div>
<div class="abs" style="left:8px;top:721px;width:14px;height:1px;background:#6e737b"></div>
<div class="abs" style="left:476px;top:706px;width:1px;height:19px;background:#9a9a9a"></div>
<div class="abs" style="left:477px;top:706px;width:1px;height:19px;background:#f6f6f6"></div>
<div class="abs" style="left:500px;top:706px;width:1px;height:19px;background:#9a9a9a"></div>
<div class="abs" style="left:501px;top:706px;width:1px;height:19px;background:#f6f6f6"></div>
<div class="abs" style="left:625px;top:706px;width:1px;height:19px;background:#9a9a9a"></div>
<div class="abs" style="left:626px;top:706px;width:1px;height:19px;background:#f6f6f6"></div>
<div class="abs" style="left:673px;top:706px;width:1px;height:19px;background:#9a9a9a"></div>
<div class="abs" style="left:674px;top:706px;width:1px;height:19px;background:#f6f6f6"></div>
<div class="abs" style="left:782px;top:706px;width:1px;height:19px;background:#9a9a9a"></div>
<div class="abs" style="left:783px;top:706px;width:1px;height:19px;background:#f6f6f6"></div>
<div class="abs" style="left:859px;top:706px;width:1px;height:19px;background:#9a9a9a"></div>
<div class="abs" style="left:860px;top:706px;width:1px;height:19px;background:#f6f6f6"></div>
<div class="abs" style="left:1021px;top:706px;width:1px;height:19px;background:#9a9a9a"></div>
<div class="abs" style="left:1022px;top:706px;width:1px;height:19px;background:#f6f6f6"></div>
<div class="abs" style="left:1077px;top:706px;width:1px;height:19px;background:#9a9a9a"></div>
<div class="abs" style="left:1078px;top:706px;width:1px;height:19px;background:#f6f6f6"></div>
<svg class="abs" style="left:481px;top:708px" width="14" height="14" viewBox="0 0 14 14" ><path d="M7 1.200V4.400" stroke="#a4a4a4" stroke-width="1.200" transform="rotate(0 7 7)"/><path d="M7 1.200V4.400" stroke="#a4a4a4" stroke-width="1.200" transform="rotate(30 7 7)"/><path d="M7 1.200V4.400" stroke="#a4a4a4" stroke-width="1.200" transform="rotate(60 7 7)"/><path d="M7 1.200V4.400" stroke="#a4a4a4" stroke-width="1.200" transform="rotate(90 7 7)"/><path d="M7 1.200V4.400" stroke="#a4a4a4" stroke-width="1.200" transform="rotate(120 7 7)"/><path d="M7 1.200V4.400" stroke="#a4a4a4" stroke-width="1.200" transform="rotate(150 7 7)"/><path d="M7 1.200V4.400" stroke="#a4a4a4" stroke-width="1.200" transform="rotate(180 7 7)"/><path d="M7 1.200V4.400" stroke="#a4a4a4" stroke-width="1.200" transform="rotate(210 7 7)"/><path d="M7 1.200V4.400" stroke="#a4a4a4" stroke-width="1.200" transform="rotate(240 7 7)"/><path d="M7 1.200V4.400" stroke="#a4a4a4" stroke-width="1.200" transform="rotate(270 7 7)"/><path d="M7 1.200V4.400" stroke="#a4a4a4" stroke-width="1.200" transform="rotate(300 7 7)"/><path d="M7 1.200V4.400" stroke="#a4a4a4" stroke-width="1.200" transform="rotate(330 7 7)"/></svg>
<span class="abs t" style="left:545.00px;top:708px;font:12px 'DejaVu Sans',Liberation Sans,sans-serif;line-height:15px;letter-spacing:0.138px;color:#000;">49:65</span>
<span class="abs t" style="left:627.60px;top:708px;font:12px 'DejaVu Sans',Liberation Sans,sans-serif;line-height:15px;letter-spacing:-0.786px;color:#000;">LF</span>
<svg class="abs" style="left:662px;top:709px" width="6" height="12" viewBox="0 0 6 12" ><path d="M0 4.800L3 1.500 6 4.800zM0 7.200L3 10.500 6 7.200z" fill="#3c3c3c"/></svg>
<span class="abs t" style="left:676.70px;top:708px;font:12px 'DejaVu Sans',Liberation Sans,sans-serif;line-height:15px;letter-spacing:0.139px;color:#000;">UTF-8</span>
<svg class="abs" style="left:770px;top:709px" width="6" height="12" viewBox="0 0 6 12" ><path d="M0 4.800L3 1.500 6 4.800zM0 7.200L3 10.500 6 7.200z" fill="#3c3c3c"/></svg>
<span class="abs t" style="left:784.00px;top:708px;font:12px 'DejaVu Sans',Liberation Sans,sans-serif;line-height:15px;letter-spacing:0.257px;color:#000;">Insert</span>
<span class="abs t" style="left:863.20px;top:707px;font:12.5px 'DejaVu Sans',Liberation Sans,sans-serif;line-height:15px;letter-spacing:-0.081px;color:#000;">Git: ad7e558</span>
<svg class="abs" style="left:1010px;top:709px" width="6" height="12" viewBox="0 0 6 12" ><path d="M0 4.800L3 1.500 6 4.800zM0 7.200L3 10.500 6 7.200z" fill="#3c3c3c"/></svg>
<svg class="abs" style="left:1028px;top:709px" width="12" height="12" viewBox="0 0 12 12" ><path d="M2.200 5.500V3.600a2.300 2.300 0 0 1 4.600 0" fill="none" stroke="#8a8a8a" stroke-width="1.400"/><rect x="3.600" y="5.200" width="7" height="5.800" rx=".8" fill="#8a8a8a"/><rect x="6.300" y="7" width="1.600" height="2.400" fill="#e4e4e4"/></svg>
<svg class="abs" style="left:1049px;top:707px" width="16" height="17" viewBox="0 0 16 17" ><path d="M3.500 5.500a4.500 4.500 0 0 1 9 0z" fill="#e8e8e8" stroke="#6a6a6a" stroke-width="1"/><path d="M2 5.800h12" stroke="#6a6a6a" stroke-width="1.200"/><path d="M4.200 6v3.500a3.800 3.800 0 0 0 7.600 0V6" fill="#f2f2f2" stroke="#6a6a6a" stroke-width="1"/><circle cx="6.300" cy="8.300" r=".8" fill="#555"/><circle cx="9.700" cy="8.300" r=".8" fill="#555"/><path d="M6.400 10.800h3.200" stroke="#555" stroke-width=".9"/><path d="M2.500 16c.4-2 2-2.800 5.500-2.800s5.100.8 5.500 2.800" fill="none" stroke="#6a6a6a" stroke-width="1"/><path d="M8 2v2" stroke="#6a6a6a"/></svg>
<div class="abs" style="left:1081px;top:707px;width:95px;height:16px;border:1px solid #8c8c8c;background:linear-gradient(90deg,#a0a0a0 0,#c6c6c6 20px,#d2d2d2 20px,#d2d2d2 62px,#e3e3e3 62px);box-sizing:border-box;box-shadow:inset 0 0 0 1px #ececec"></div>
<span class="abs t" style="left:1092.40px;top:708px;font:11px 'DejaVu Sans',Liberation Sans,sans-serif;line-height:15px;letter-spacing:0.022px;color:#000;">96M of 455M</span>
<svg class="abs" style="left:1170px;top:718px" width="10" height="10" viewBox="0 0 10 10" ><circle cx="8.400" cy="4.400" r=".65" fill="#6a6a6a"/><circle cx="7.400" cy="7.500" r=".65" fill="#6a6a6a"/><circle cx="4.400" cy="8.400" r=".65" fill="#6a6a6a"/></svg>
<div id="frame"></div>
</div>
</body></html>
